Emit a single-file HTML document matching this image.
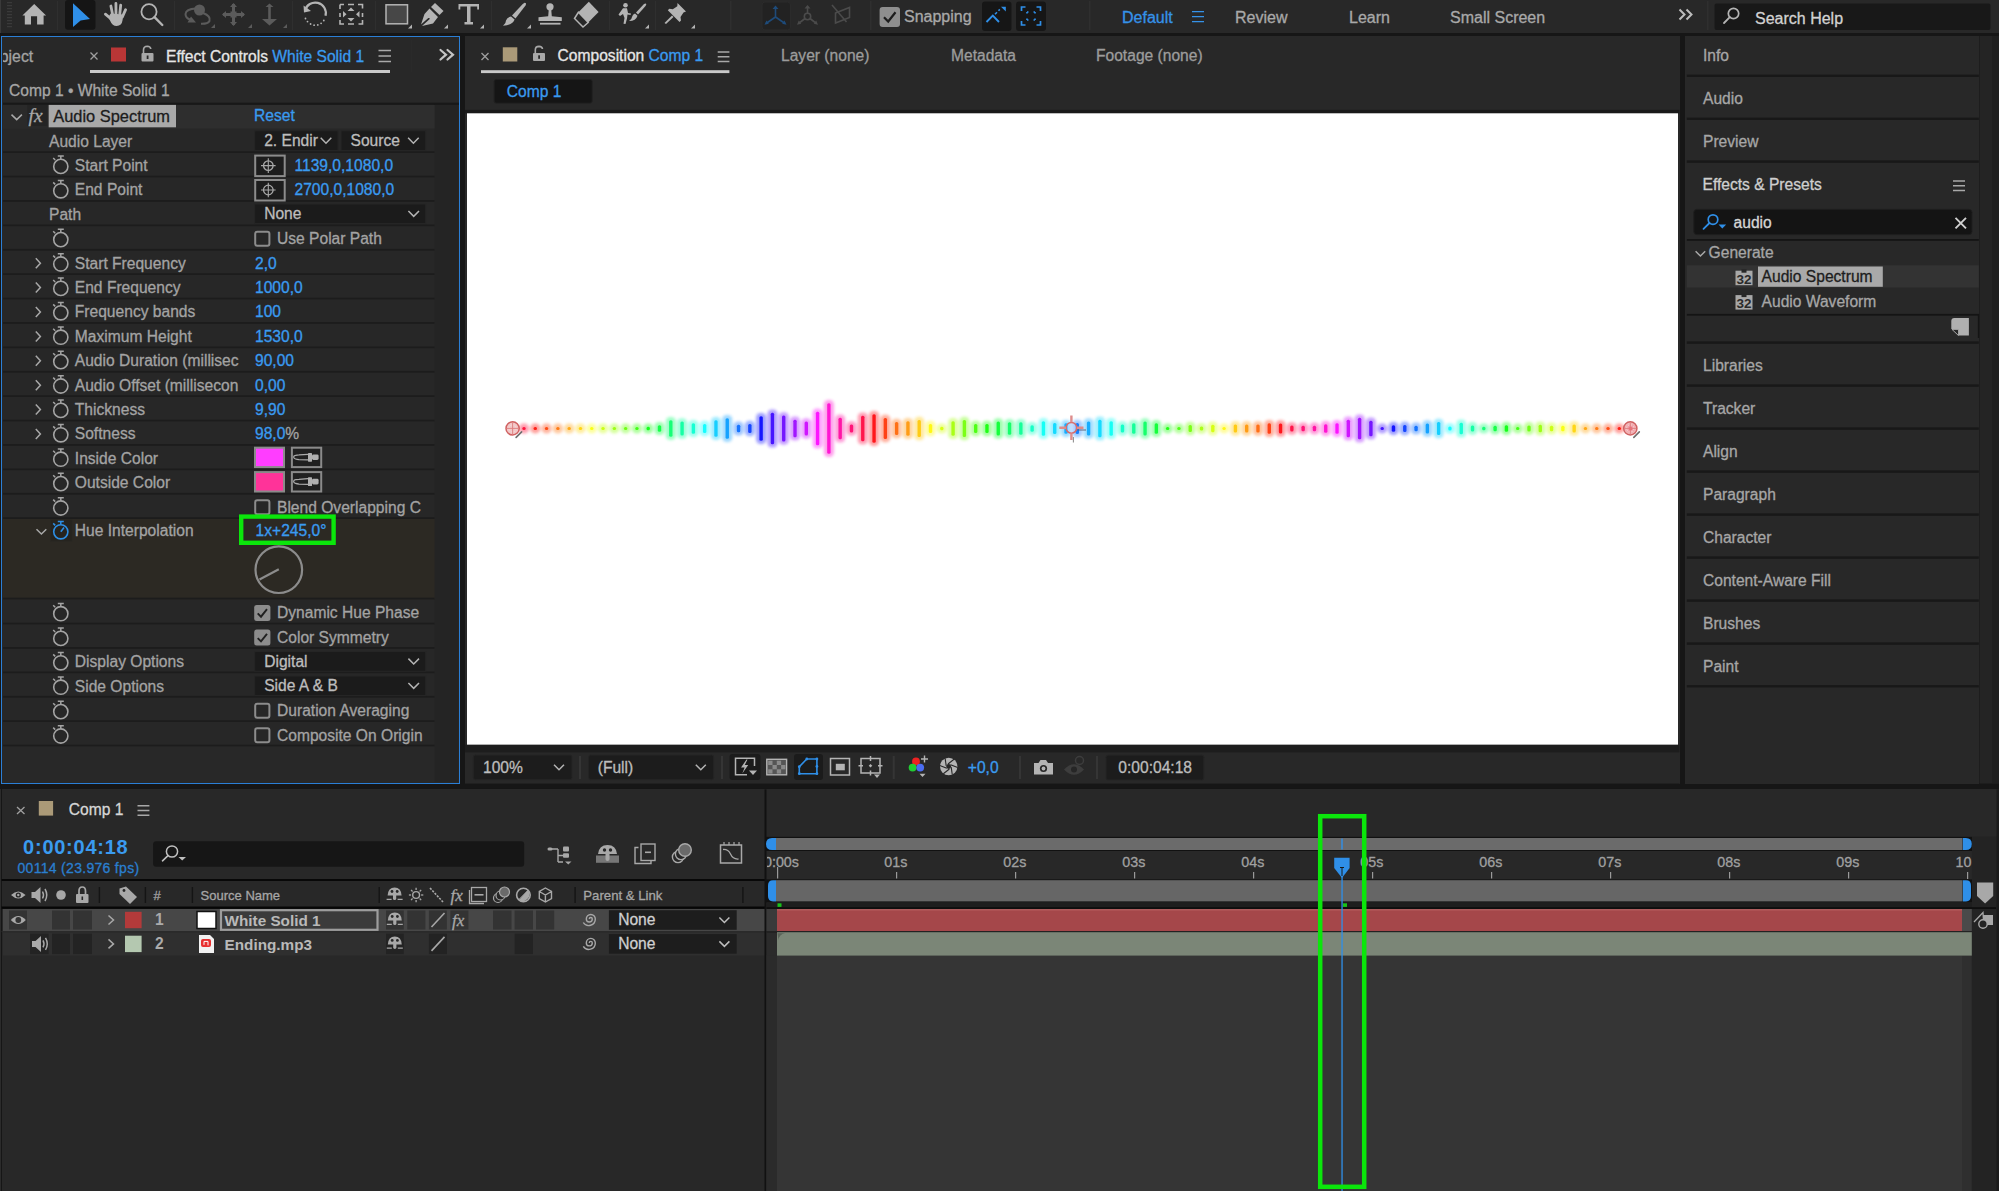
<!DOCTYPE html>
<html><head><meta charset="utf-8">
<style>
*{box-sizing:border-box;margin:0;padding:0}
html,body{width:1999px;height:1191px;overflow:hidden;background:#161616;font-family:"Liberation Sans",sans-serif;font-size:15.5px;color:#a3a3a3}
.a{position:absolute}
.t{position:absolute;white-space:nowrap;line-height:1;-webkit-text-stroke:0.3px currentColor}
.blue{color:#3a98ef}
svg{position:absolute;overflow:visible}
</style></head><body>

<!-- TOOLBAR -->
<div class="a" id="toolbar" style="left:0;top:0;width:1999px;height:33px;background:#282828">
<svg width="1999" height="33" style="left:0;top:0">
<g fill="#3a3a3a"><rect x="7" y="2" width="5" height="1.3"/><rect x="7" y="5" width="5" height="1.3"/><rect x="7" y="8" width="5" height="1.3"/><rect x="7" y="11" width="5" height="1.3"/><rect x="7" y="14" width="5" height="1.3"/><rect x="7" y="17" width="5" height="1.3"/><rect x="7" y="20" width="5" height="1.3"/><rect x="7" y="23" width="5" height="1.3"/><rect x="7" y="26" width="5" height="1.3"/></g>
<g fill="#2f2f2f"><rect x="57" y="1" width="1" height="29"/><rect x="174" y="1" width="1" height="29"/><rect x="292" y="1" width="1" height="29"/><rect x="375" y="1" width="1" height="29"/><rect x="491" y="1" width="1" height="29"/><rect x="609" y="1" width="1" height="29"/><rect x="655" y="1" width="1" height="29"/><rect x="730" y="1" width="1.5" height="29"/><rect x="870" y="1" width="1.5" height="29"/><rect x="1089" y="1" width="1.5" height="29"/><rect x="1707" y="1" width="1.5" height="29"/></g>
<path d="M34.2 4 L46.1 15.6 L43.6 15.6 L43.6 24.6 L37.1 24.6 L37.1 16.2 L31 16.2 L31 24.6 L24.8 24.6 L24.8 15.6 L22.4 15.6 Z" fill="#b4b4b4"/>
<rect x="65" y="0" width="30.5" height="29.7" rx="3" fill="#151515"/>
<path d="M73 3.2 L90 18.9 L80.6 20.6 L73 27 Z" fill="#2f8fe8"/>
<path d="M125.6 9.7 L122.4 16.8 M120.7 5.1 L119.8 14 M115.9 3.5 L116 14 M110.9 6 L112.6 14.5 M105.4 14.2 L110.8 18.6" stroke="#b4b4b4" stroke-width="2.8" stroke-linecap="round"/><path d="M110.6 13.5 L123.4 14.5 L122.6 20 Q121.8 25.9 116.6 25.9 Q112.2 25.9 110.4 21.2 L108.4 17.2 Z" fill="#b4b4b4"/>
<circle cx="149" cy="11.7" r="7.6" fill="none" stroke="#b4b4b4" stroke-width="1.8"/><path d="M154.5 17.2 L162.3 25" stroke="#b4b4b4" stroke-width="2.4" stroke-linecap="round"/>
<g fill="#5b5b5b" stroke="#5b5b5b">
<circle cx="199.5" cy="10" r="5.5" stroke="none"/>
<path d="M196 8.5 Q186 9 185.5 14 Q185.5 18 190 19.5" fill="none" stroke-width="2"/><path d="M203 13 Q211 16 209.5 21 Q208 24 201 23.8" fill="none" stroke-width="2"/><path d="M187.5 22.5 L196 22.5 L191 16.5 Z" stroke="none"/>
<path d="M233.5 4 L233.5 25 M223 14.5 L244 14.5" stroke-width="3"/><path d="M233.5 3 L230 7 L237 7Z M233.5 26 L230 22 L237 22Z M222 14.5 L226 11 L226 18Z M245 14.5 L241 11 L241 18Z" stroke="none"/><rect x="230.5" y="11.5" width="6" height="6" stroke="none"/>
<path d="M269.5 5 L269.5 22" stroke-width="2.6"/><path d="M269.5 3.5 L265.5 7 L273.5 7Z M262 19 L277 19 L269.5 25.5Z" stroke="none"/>
<path d="M211 28 L215 28 L215 24Z M248 28 L252 28 L252 24Z M283 28 L287 28 L287 24Z" stroke="none"/>
</g>
<g fill="#b4b4b4">
<path d="M305 10.5 A10.5 10.5 0 1 1 325.5 15.8" fill="none" stroke="#b4b4b4" stroke-width="2.2" stroke-dasharray="40 0"/>
<path d="M303.5 5.5 L304 12.5 L311 11 Z"/>
<g><circle cx="305.5" cy="18.5" r="0.9"/><circle cx="307.5" cy="21.6" r="0.9"/><circle cx="310.6" cy="24" r="0.9"/><circle cx="314.1" cy="25.2" r="0.9"/><circle cx="317.8" cy="24.9" r="0.9"/><circle cx="321.1" cy="23.3" r="0.9"/><circle cx="323.8" cy="20.5" r="0.9"/></g>
<path d="M340 4.5 h4 M348 4.5 h6 M358 4.5 h4.5 v4 M362.5 13 v4 M362.5 20 v4 h-4 M354 24 h-6 M344 24 h-4 v-4 M340 17 v-4 M340 9 v-4.5" fill="none" stroke="#b4b4b4" stroke-width="1.6"/>
<path d="M351 7.5 L354.5 11 L347.5 11Z M351 21.5 L354.5 18 L347.5 18Z M343 11 L346.5 14.3 L343 17.5Z M359.5 11 L356 14.3 L359.5 17.5Z"/>
<rect x="386" y="4.8" width="21.5" height="19" fill="#474747" stroke="#b4b4b4" stroke-width="1.5"/>
<path d="M408 28.5 L412 28.5 L412 24.5Z M444 28.5 L448 28.5 L448 24.5Z M480 28.5 L484 28.5 L484 24.5Z M527 28.5 L531 28.5 L531 24.5Z M645 28.5 L649 28.5 L649 24.5Z M691 28.5 L695 28.5 L695 24.5Z"/>
<path d="M435 3 L443.5 11 L439.5 15 L431 7Z"/><path d="M429.5 8.5 L438 17 L433 23.5 L422 26 L430 18.8 Q429 17.5 428.3 18.1 L421 24.6 L424.5 14Z"/>
<path d="M458.5 4 L479 4 L479 9.6 L477.2 9.6 L477.2 6.6 L470.5 6.6 L470.5 22 L473 22 L473 24.5 L464.5 24.5 L464.5 22 L467 22 L467 6.6 L460.3 6.6 L460.3 9.6 L458.5 9.6Z"/>
<path d="M524.5 2.8 Q527 3 525.5 5.5 L515.5 18.5 L512 15.6 L522.5 4.2Z"/><path d="M511 16.5 L514.6 19.5 Q513 25 503 25.8 Q506 23.8 506 20.5 Q507 17.3 511 16.5Z"/>
<circle cx="550" cy="6.8" r="3.6"/><path d="M548.8 9 L551.2 9 L551.8 16.2 L561.8 17.3 L561.8 21 L538.5 21 L538.5 17.3 L548.2 16.2Z"/><rect x="540" y="22.8" width="20.5" height="1.8"/>
<path d="M588.8 1.8 L598.6 12 L588.2 22.5 L578.4 12.3Z"/><path d="M578.4 12.3 L588.2 22.5 L583 27 L574.5 18.5Z" fill="none" stroke="#b4b4b4" stroke-width="1.5"/>
<circle cx="625.5" cy="5.2" r="2.3"/><path d="M623 8.3 L627 8.3 L628 13 L631 13.5 L630.5 15 L627.5 14.5 L627 18.5 L625.5 24 L623.5 23.8 L624.5 18 L623 14 L620 16 L618.5 14.5Z"/><path d="M645.5 3.5 Q647 4 645.5 6 L638 14.5 L636 12.5 L644 4Z"/><path d="M635 13.5 L637.5 15.8 Q636 21 629 21 Q632 19 632 17 Q632.6 14 635 13.5Z"/>
<path d="M677.5 3 L686 11.5 L683.5 12.5 L680.5 17 L681 20.5 L679.5 22 L667.8 10.3 L669.3 8.8 L672.8 9.3 L677.3 6.3Z"/><path d="M672 15.5 L673.5 17 L666 24 L664.5 23Z"/>
</g>
<rect x="762" y="2" width="28.5" height="28" rx="3" fill="#222" stroke="#2b2b2b"/>
<g stroke="#1e4b7a" stroke-width="1.6" fill="none"><path d="M775.5 17 L775.5 7 M775.5 17 L766 23.5 M775.5 17 L785 23.5"/></g><g fill="#1e4b7a"><path d="M775.5 5.5 L772.5 9 L778.5 9Z M764.5 24.8 L766.5 20.5 L768.8 23.8Z M786.5 24.8 L784.5 20.5 L782.2 23.8Z"/></g>
<g stroke="#4b4b4b" stroke-width="1.6" fill="none"><circle cx="807.5" cy="16.5" r="3.2"/><path d="M807.5 13 L807.5 6.5 M805 18.5 L798.5 23.5 M810 18.5 L816.5 23.5"/><path d="M835.5 13 L849.5 7.5 L849.5 17.5 L835.5 23Z M832 5 L846.5 22"/></g>
<g fill="#4b4b4b"><path d="M807.5 5 L804.5 8.5 L810.5 8.5Z M797 24.8 L798.8 20.5 L801.2 23.8Z M818 24.8 L816.2 20.5 L813.8 23.8Z"/></g>
<rect x="879.6" y="7" width="20.4" height="20" rx="3" fill="#8e8e8e"/><path d="M884 17.2 L888.2 21.5 L895.5 12.3" fill="none" stroke="#1d1d1d" stroke-width="2.2"/>
<rect x="982" y="1.5" width="29.5" height="29.5" rx="3" fill="#161616"/><rect x="1016" y="1.5" width="30" height="29.5" rx="3" fill="#161616"/>
<path d="M986.5 22 L992.8 15.5 L999 22" fill="none" stroke="#2f8fe8" stroke-width="1.9"/><path d="M995 14.2 L997 12.2 M998.5 10.7 L999.8 9.4" stroke="#2f8fe8" stroke-width="1.6"/><path d="M1001 6.8 L1005.8 6.8 L1005.8 11.6Z" fill="#2f8fe8"/>
<path d="M1021.5 11 V7 H1025.5 M1036.5 7 H1040.5 V11 M1040.5 21 V25 H1036.5 M1025.5 25 H1021.5 V21 M1027 12 h1.5 M1033.5 12 h1.5 M1027 20 h1.5 M1033.5 20 h1.5 M1027 12 v1.5 M1035 12 v1.5 M1027 20 v-1.5 M1035 20 v-1.5" fill="none" stroke="#2f8fe8" stroke-width="1.7"/>
<path d="M1192 11.6 h12 M1192 16.6 h12 M1192 21.6 h12" stroke="#3592e8" stroke-width="1.4"/>
<path d="M1679.5 9.5 L1684.5 14.5 L1679.5 19.5 M1686.5 9.5 L1691.5 14.5 L1686.5 19.5" fill="none" stroke="#bdbdbd" stroke-width="2"/>
<rect x="1714.5" y="3.5" width="276" height="26.5" rx="2" fill="#181818"/>
<circle cx="1733.5" cy="13.5" r="5.2" fill="none" stroke="#b4b4b4" stroke-width="1.7"/><path d="M1729.8 17.2 L1724 23" stroke="#b4b4b4" stroke-width="1.8" stroke-linecap="round"/>
</svg>
<div class="t" style="left:904px;top:9px;font-size:16px;color:#a9a9a9">Snapping</div>
<div class="t" style="left:1122px;top:10px;font-size:16px;color:#3592e8">Default</div>
<div class="t" style="left:1235px;top:10px;font-size:16px;color:#a9a9a9">Review</div>
<div class="t" style="left:1349px;top:10px;font-size:16px;color:#a9a9a9">Learn</div>
<div class="t" style="left:1450px;top:10px;font-size:16px;color:#a9a9a9">Small Screen</div>
<div class="t" style="left:1755px;top:11px;font-size:16px;color:#d2d2d2">Search Help</div>
</div>


<!-- EFFECT CONTROLS PANEL -->
<div class="a" style="left:1.3px;top:36px;width:459px;height:748px;background:#282828;border:1.8px solid #2b7fd6"></div><svg width="470" height="790" style="left:0;top:0"><path d="M90.5 52.5 L97.5 59.5 M97.5 52.5 L90.5 59.5" stroke="#a0a0a0" stroke-width="1.3"/><rect x="111" y="47.5" width="15" height="14" fill="#b93636"/><path d="M143.5 53.5 V50 Q143.5 46.2 147.3 46.2 Q150.5 46.4 150.8 49" fill="none" stroke="#a8a8a8" stroke-width="1.6"/><rect x="141.5" y="53" width="12" height="8.5" rx="1" fill="#a8a8a8"/><rect x="146.7" y="55.5" width="1.8" height="3.5" fill="#282828"/><rect x="90" y="70" width="300" height="3" fill="#c9c9c9"/><path d="M378.5 50.5 h12.5 M378.5 56 h12.5 M378.5 61.5 h12.5" stroke="#a8a8a8" stroke-width="1.5"/><path d="M440.5 50 L446 54.7 L440.5 59.5 M447.5 50 L453 54.7 L447.5 59.5" fill="none" stroke="#c4c4c4" stroke-width="2.2" stroke-linecap="round"/><rect x="411" y="40" width="1" height="32" fill="#2a2a2a"/><rect x="3" y="102.7" width="456" height="2.2" fill="#181818"/><rect x="3" y="128.6" width="431.5" height="617.4" fill="#272727"/><rect x="434.5" y="104.9" width="24" height="677" fill="#242424"/><rect x="3" y="104.9" width="431.5" height="23.7" fill="#2e2e2e"/><rect x="3" y="104.9" width="45" height="23.7" fill="#2a2a2a"/><rect x="27.3" y="104.9" width="20.2" height="21" fill="#242424"/><rect x="48.7" y="104.9" width="127.3" height="22.4" fill="#a9a9a9"/><path d="M11.5 114.6 L16.7 119.6 L21.9 114.6" fill="none" stroke="#a8a8a8" stroke-width="1.5"/><rect x="3" y="151.30" width="431.5" height="1.7" fill="#1c1c1c"/><rect x="254.7" y="130.8" width="83.40000000000003" height="19.6" fill="#1b1b1b" stroke="#262626" stroke-width="1"/><path d="M320.7 137.8 L326 143.20000000000002 L331.3 137.8" fill="none" stroke="#b4b4b4" stroke-width="1.5"/><rect x="341" y="130.8" width="84.69999999999999" height="19.6" fill="#1b1b1b" stroke="#262626" stroke-width="1"/><path d="M408.09999999999997 137.8 L413.4 143.20000000000002 L418.7 137.8" fill="none" stroke="#b4b4b4" stroke-width="1.5"/><rect x="3" y="175.70" width="431.5" height="1.7" fill="#1c1c1c"/><circle cx="60.8" cy="166.4" r="7.1" fill="none" stroke="#a4a4a4" stroke-width="1.6"/><path d="M60.8 159.20000000000002 V156.20000000000002 M57.8 156.1 H63.8 M53.199999999999996 158.0 L55.199999999999996 160.0" stroke="#a4a4a4" stroke-width="1.5"/><rect x="255.2" y="155.6" width="29.5" height="20.5" fill="#1d1d1d" stroke="#8c8c8c" stroke-width="2"/><circle cx="268.3" cy="165.6" r="4.8" fill="none" stroke="#a8a8a8" stroke-width="1.3"/><path d="M261 165.6 H275.6 M268.3 158.29999999999998 V172.9" stroke="#a8a8a8" stroke-width="1.1"/><rect x="3" y="200.10" width="431.5" height="1.7" fill="#1c1c1c"/><circle cx="60.8" cy="190.80000000000004" r="7.1" fill="none" stroke="#a4a4a4" stroke-width="1.6"/><path d="M60.8 183.60000000000005 V180.60000000000005 M57.8 180.50000000000003 H63.8 M53.199999999999996 182.40000000000003 L55.199999999999996 184.40000000000003" stroke="#a4a4a4" stroke-width="1.5"/><rect x="255.2" y="180.00000000000003" width="29.5" height="20.5" fill="#1d1d1d" stroke="#8c8c8c" stroke-width="2"/><circle cx="268.3" cy="190.00000000000003" r="4.8" fill="none" stroke="#a8a8a8" stroke-width="1.3"/><path d="M261 190.00000000000003 H275.6 M268.3 182.70000000000002 V197.30000000000004" stroke="#a8a8a8" stroke-width="1.1"/><rect x="3" y="224.50" width="431.5" height="1.7" fill="#1c1c1c"/><rect x="254.7" y="204.0" width="171.0" height="19.6" fill="#1b1b1b" stroke="#262626" stroke-width="1"/><path d="M408.4 211.0 L413.7 216.4 L419.0 211.0" fill="none" stroke="#b4b4b4" stroke-width="1.5"/><rect x="3" y="248.90" width="431.5" height="1.7" fill="#1c1c1c"/><circle cx="60.8" cy="239.60000000000005" r="7.1" fill="none" stroke="#a4a4a4" stroke-width="1.6"/><path d="M60.8 232.40000000000006 V229.40000000000006 M57.8 229.30000000000004 H63.8 M53.199999999999996 231.20000000000005 L55.199999999999996 233.20000000000005" stroke="#a4a4a4" stroke-width="1.5"/><rect x="255.2" y="231.80000000000004" width="14.2" height="14" rx="2" fill="none" stroke="#8c8c8c" stroke-width="2"/><rect x="3" y="273.30" width="431.5" height="1.7" fill="#1c1c1c"/><circle cx="60.8" cy="264.0" r="7.1" fill="none" stroke="#a4a4a4" stroke-width="1.6"/><path d="M60.8 256.8 V253.8 M57.8 253.7 H63.8 M53.199999999999996 255.6 L55.199999999999996 257.6" stroke="#a4a4a4" stroke-width="1.5"/><path d="M35.8 258.2 L40.4 263.2 L35.8 268.2" fill="none" stroke="#a8a8a8" stroke-width="1.5"/><rect x="3" y="297.70" width="431.5" height="1.7" fill="#1c1c1c"/><circle cx="60.8" cy="288.4" r="7.1" fill="none" stroke="#a4a4a4" stroke-width="1.6"/><path d="M60.8 281.2 V278.2 M57.8 278.09999999999997 H63.8 M53.199999999999996 280.0 L55.199999999999996 282.0" stroke="#a4a4a4" stroke-width="1.5"/><path d="M35.8 282.59999999999997 L40.4 287.59999999999997 L35.8 292.59999999999997" fill="none" stroke="#a8a8a8" stroke-width="1.5"/><rect x="3" y="322.10" width="431.5" height="1.7" fill="#1c1c1c"/><circle cx="60.8" cy="312.79999999999995" r="7.1" fill="none" stroke="#a4a4a4" stroke-width="1.6"/><path d="M60.8 305.59999999999997 V302.59999999999997 M57.8 302.49999999999994 H63.8 M53.199999999999996 304.4 L55.199999999999996 306.4" stroke="#a4a4a4" stroke-width="1.5"/><path d="M35.8 306.99999999999994 L40.4 311.99999999999994 L35.8 316.99999999999994" fill="none" stroke="#a8a8a8" stroke-width="1.5"/><rect x="3" y="346.50" width="431.5" height="1.7" fill="#1c1c1c"/><circle cx="60.8" cy="337.19999999999993" r="7.1" fill="none" stroke="#a4a4a4" stroke-width="1.6"/><path d="M60.8 329.99999999999994 V326.99999999999994 M57.8 326.8999999999999 H63.8 M53.199999999999996 328.79999999999995 L55.199999999999996 330.79999999999995" stroke="#a4a4a4" stroke-width="1.5"/><path d="M35.8 331.3999999999999 L40.4 336.3999999999999 L35.8 341.3999999999999" fill="none" stroke="#a8a8a8" stroke-width="1.5"/><rect x="3" y="370.90" width="431.5" height="1.7" fill="#1c1c1c"/><circle cx="60.8" cy="361.5999999999999" r="7.1" fill="none" stroke="#a4a4a4" stroke-width="1.6"/><path d="M60.8 354.3999999999999 V351.3999999999999 M57.8 351.2999999999999 H63.8 M53.199999999999996 353.19999999999993 L55.199999999999996 355.19999999999993" stroke="#a4a4a4" stroke-width="1.5"/><path d="M35.8 355.7999999999999 L40.4 360.7999999999999 L35.8 365.7999999999999" fill="none" stroke="#a8a8a8" stroke-width="1.5"/><rect x="3" y="395.30" width="431.5" height="1.7" fill="#1c1c1c"/><circle cx="60.8" cy="385.9999999999999" r="7.1" fill="none" stroke="#a4a4a4" stroke-width="1.6"/><path d="M60.8 378.7999999999999 V375.7999999999999 M57.8 375.6999999999999 H63.8 M53.199999999999996 377.5999999999999 L55.199999999999996 379.5999999999999" stroke="#a4a4a4" stroke-width="1.5"/><path d="M35.8 380.1999999999999 L40.4 385.1999999999999 L35.8 390.1999999999999" fill="none" stroke="#a8a8a8" stroke-width="1.5"/><rect x="3" y="419.70" width="431.5" height="1.7" fill="#1c1c1c"/><circle cx="60.8" cy="410.39999999999986" r="7.1" fill="none" stroke="#a4a4a4" stroke-width="1.6"/><path d="M60.8 403.1999999999999 V400.1999999999999 M57.8 400.09999999999985 H63.8 M53.199999999999996 401.9999999999999 L55.199999999999996 403.9999999999999" stroke="#a4a4a4" stroke-width="1.5"/><path d="M35.8 404.59999999999985 L40.4 409.59999999999985 L35.8 414.59999999999985" fill="none" stroke="#a8a8a8" stroke-width="1.5"/><rect x="3" y="444.10" width="431.5" height="1.7" fill="#1c1c1c"/><circle cx="60.8" cy="434.79999999999984" r="7.1" fill="none" stroke="#a4a4a4" stroke-width="1.6"/><path d="M60.8 427.59999999999985 V424.59999999999985 M57.8 424.49999999999983 H63.8 M53.199999999999996 426.39999999999986 L55.199999999999996 428.39999999999986" stroke="#a4a4a4" stroke-width="1.5"/><path d="M35.8 428.99999999999983 L40.4 433.99999999999983 L35.8 438.99999999999983" fill="none" stroke="#a8a8a8" stroke-width="1.5"/><rect x="3" y="468.50" width="431.5" height="1.7" fill="#1c1c1c"/><circle cx="60.8" cy="459.1999999999998" r="7.1" fill="none" stroke="#a4a4a4" stroke-width="1.6"/><path d="M60.8 451.99999999999983 V448.99999999999983 M57.8 448.8999999999998 H63.8 M53.199999999999996 450.79999999999984 L55.199999999999996 452.79999999999984" stroke="#a4a4a4" stroke-width="1.5"/><rect x="255" y="447.6999999999998" width="29" height="19.4" fill="#ff3dff" stroke="#8a8a8a" stroke-width="2"/><rect x="291.9" y="447.6999999999998" width="29.3" height="19.4" fill="#202020" stroke="#8a8a8a" stroke-width="2"/><path d="M308 454.29999999999984 L299 454.8999999999998 Q297 454.8999999999998 295.5 455.29999999999984 Q293.6 455.59999999999985 293.6 457.09999999999985 Q293.6 458.59999999999985 295.5 458.99999999999983 Q297 459.3999999999998 299 459.6999999999998 L308 459.8999999999998" fill="none" stroke="#aaaaaa" stroke-width="1.2"/><rect x="308" y="452.8999999999998" width="4" height="8.8" rx="0.6" fill="#b0b0b0"/><rect x="312" y="454.3999999999998" width="6.6" height="5.6" rx="1.4" fill="#b0b0b0"/><rect x="3" y="492.90" width="431.5" height="1.7" fill="#1c1c1c"/><circle cx="60.8" cy="483.5999999999998" r="7.1" fill="none" stroke="#a4a4a4" stroke-width="1.6"/><path d="M60.8 476.3999999999998 V473.3999999999998 M57.8 473.2999999999998 H63.8 M53.199999999999996 475.1999999999998 L55.199999999999996 477.1999999999998" stroke="#a4a4a4" stroke-width="1.5"/><rect x="255" y="472.0999999999998" width="29" height="19.4" fill="#ff3399" stroke="#8a8a8a" stroke-width="2"/><rect x="291.9" y="472.0999999999998" width="29.3" height="19.4" fill="#202020" stroke="#8a8a8a" stroke-width="2"/><path d="M308 478.6999999999998 L299 479.2999999999998 Q297 479.2999999999998 295.5 479.6999999999998 Q293.6 479.99999999999983 293.6 481.49999999999983 Q293.6 482.99999999999983 295.5 483.3999999999998 Q297 483.7999999999998 299 484.0999999999998 L308 484.2999999999998" fill="none" stroke="#aaaaaa" stroke-width="1.2"/><rect x="308" y="477.2999999999998" width="4" height="8.8" rx="0.6" fill="#b0b0b0"/><rect x="312" y="478.7999999999998" width="6.6" height="5.6" rx="1.4" fill="#b0b0b0"/><rect x="3" y="517.30" width="431.5" height="1.7" fill="#1c1c1c"/><circle cx="60.8" cy="507.9999999999998" r="7.1" fill="none" stroke="#a4a4a4" stroke-width="1.6"/><path d="M60.8 500.7999999999998 V497.7999999999998 M57.8 497.69999999999976 H63.8 M53.199999999999996 499.5999999999998 L55.199999999999996 501.5999999999998" stroke="#a4a4a4" stroke-width="1.5"/><rect x="255.2" y="500.19999999999976" width="14.2" height="14" rx="2" fill="none" stroke="#8c8c8c" stroke-width="2"/><rect x="3" y="518.9999999999998" width="431.5" height="80.4000000000002" fill="#2c2923"/><rect x="50.4" y="519.7999999999997" width="21.6" height="21.6" fill="#26241f" stroke="#2a2824" stroke-width="0.8"/><path d="M36.5 529.1999999999998 L41.4 533.9999999999998 L46.3 529.1999999999998" fill="none" stroke="#a8a8a8" stroke-width="1.5"/><circle cx="60.8" cy="531.7999999999997" r="7.1" fill="none" stroke="#2d8fe5" stroke-width="1.6"/><path d="M60.8 524.5999999999997 V521.5999999999997 M57.8 521.4999999999998 H63.8 M53.199999999999996 523.3999999999997 L55.199999999999996 525.3999999999997" stroke="#2d8fe5" stroke-width="1.5"/><path d="M60.8 531.7999999999997 L64 527.4999999999998" stroke="#2d8fe5" stroke-width="1.6"/><circle cx="278.8" cy="569.7" r="23.3" fill="none" stroke="#8c8c8c" stroke-width="2.2"/><path d="M278.8 569.3 L259.5 579.5" stroke="#8c8c8c" stroke-width="2.2"/><rect x="3" y="597.70" width="431.5" height="1.7" fill="#1c1c1c"/><rect x="3" y="622.70" width="431.5" height="1.7" fill="#1c1c1c"/><circle cx="60.8" cy="613.6999999999999" r="7.1" fill="none" stroke="#a4a4a4" stroke-width="1.6"/><path d="M60.8 606.4999999999999 V603.4999999999999 M57.8 603.4 H63.8 M53.199999999999996 605.3 L55.199999999999996 607.3" stroke="#a4a4a4" stroke-width="1.5"/><rect x="254.2" y="604.9" width="16.2" height="16" rx="2.5" fill="#8c8c8c"/><path d="M257.7 613.4 L261.0 616.6999999999999 L267.0 609.1" fill="none" stroke="#202020" stroke-width="1.9"/><rect x="3" y="647.10" width="431.5" height="1.7" fill="#1c1c1c"/><circle cx="60.8" cy="638.3999999999999" r="7.1" fill="none" stroke="#a4a4a4" stroke-width="1.6"/><path d="M60.8 631.1999999999998 V628.1999999999998 M57.8 628.0999999999999 H63.8 M53.199999999999996 629.9999999999999 L55.199999999999996 631.9999999999999" stroke="#a4a4a4" stroke-width="1.5"/><rect x="254.2" y="629.5999999999999" width="16.2" height="16" rx="2.5" fill="#8c8c8c"/><path d="M257.7 638.0999999999999 L261.0 641.3999999999999 L267.0 633.8" fill="none" stroke="#202020" stroke-width="1.9"/><rect x="3" y="671.50" width="431.5" height="1.7" fill="#1c1c1c"/><circle cx="60.8" cy="662.8" r="7.1" fill="none" stroke="#a4a4a4" stroke-width="1.6"/><path d="M60.8 655.5999999999999 V652.5999999999999 M57.8 652.5 H63.8 M53.199999999999996 654.4 L55.199999999999996 656.4" stroke="#a4a4a4" stroke-width="1.5"/><rect x="254.7" y="651.6" width="171.0" height="19.6" fill="#1b1b1b" stroke="#262626" stroke-width="1"/><path d="M408.4 658.6 L413.7 664.0 L419.0 658.6" fill="none" stroke="#b4b4b4" stroke-width="1.5"/><rect x="3" y="695.90" width="431.5" height="1.7" fill="#1c1c1c"/><circle cx="60.8" cy="687.1999999999998" r="7.1" fill="none" stroke="#a4a4a4" stroke-width="1.6"/><path d="M60.8 679.9999999999998 V676.9999999999998 M57.8 676.8999999999999 H63.8 M53.199999999999996 678.7999999999998 L55.199999999999996 680.7999999999998" stroke="#a4a4a4" stroke-width="1.5"/><rect x="254.7" y="675.9999999999999" width="171.0" height="19.6" fill="#1b1b1b" stroke="#262626" stroke-width="1"/><path d="M408.4 682.9999999999999 L413.7 688.3999999999999 L419.0 682.9999999999999" fill="none" stroke="#b4b4b4" stroke-width="1.5"/><rect x="3" y="720.30" width="431.5" height="1.7" fill="#1c1c1c"/><circle cx="60.8" cy="711.5999999999999" r="7.1" fill="none" stroke="#a4a4a4" stroke-width="1.6"/><path d="M60.8 704.3999999999999 V701.3999999999999 M57.8 701.3 H63.8 M53.199999999999996 703.1999999999999 L55.199999999999996 705.1999999999999" stroke="#a4a4a4" stroke-width="1.5"/><rect x="255.2" y="703.8" width="14.2" height="14" rx="2" fill="none" stroke="#8c8c8c" stroke-width="2"/><rect x="3" y="744.70" width="431.5" height="1.7" fill="#1c1c1c"/><circle cx="60.8" cy="735.9999999999998" r="7.1" fill="none" stroke="#a4a4a4" stroke-width="1.6"/><path d="M60.8 728.7999999999997 V725.7999999999997 M57.8 725.6999999999998 H63.8 M53.199999999999996 727.5999999999998 L55.199999999999996 729.5999999999998" stroke="#a4a4a4" stroke-width="1.5"/><rect x="255.2" y="728.1999999999998" width="14.2" height="14" rx="2" fill="none" stroke="#8c8c8c" stroke-width="2"/><rect x="241.2" y="516.6" width="92.4" height="26.2" fill="none" stroke="#0be60b" stroke-width="4.4"/></svg><div class="a" style="left:3px;top:40px;width:60px;height:30px;overflow:hidden"><div class="t" style="left:-3.2px;top:8.6px;font-size:15.8px;color:#a3a3a3">bject</div></div><div class="t" style="left:166px;top:48.68px;font-size:15.6px;color:#e6e6e6;">Effect Controls <span style="color:#3a9bf0">White Solid 1</span></div><div class="t" style="left:9px;top:82.98px;font-size:15.6px;color:#a6a6a6;">Comp 1 • White Solid 1</div><div class="t" style="left:53.3px;top:108.40px;font-size:16.4px;color:#1c1c1c;">Audio Spectrum</div><div class="t" style="left:28.5px;top:106.20px;font-size:19.5px;color:#a8a8a8;font-family:'Liberation Serif',serif;font-style:italic;">fx</div><div class="t" style="left:254px;top:108.48px;font-size:15.6px;color:#3a9bf0;">Reset</div><div class="t" style="left:49px;top:133.68px;font-size:15.6px;color:#a3a3a3;">Audio Layer</div><div class="t" style="left:264.2px;top:133.08px;font-size:15.6px;color:#bdbdbd;">2. Endir</div><div class="t" style="left:350.5px;top:133.08px;font-size:15.6px;color:#bdbdbd;">Source</div><div class="t" style="left:74.8px;top:158.08px;font-size:15.6px;color:#a3a3a3;">Start Point</div><div class="t" style="left:294.5px;top:158.08px;font-size:15.6px;color:#3a9bf0;">1139,0,1080,0</div><div class="t" style="left:74.8px;top:182.48px;font-size:15.6px;color:#a3a3a3;">End Point</div><div class="t" style="left:294.5px;top:182.48px;font-size:15.6px;color:#3a9bf0;">2700,0,1080,0</div><div class="t" style="left:49px;top:206.88px;font-size:15.6px;color:#a3a3a3;">Path</div><div class="t" style="left:264.2px;top:206.28px;font-size:15.6px;color:#bdbdbd;">None</div><div class="t" style="left:277px;top:231.28px;font-size:15.6px;color:#a3a3a3;">Use Polar Path</div><div class="t" style="left:74.8px;top:255.68px;font-size:15.6px;color:#a3a3a3;">Start Frequency</div><div class="t" style="left:255px;top:255.68px;font-size:15.6px;color:#3a9bf0;">2,0</div><div class="t" style="left:74.8px;top:280.08px;font-size:15.6px;color:#a3a3a3;">End Frequency</div><div class="t" style="left:255px;top:280.08px;font-size:15.6px;color:#3a9bf0;">1000,0</div><div class="t" style="left:74.8px;top:304.48px;font-size:15.6px;color:#a3a3a3;">Frequency bands</div><div class="t" style="left:255px;top:304.48px;font-size:15.6px;color:#3a9bf0;">100</div><div class="t" style="left:74.8px;top:328.88px;font-size:15.6px;color:#a3a3a3;">Maximum Height</div><div class="t" style="left:255px;top:328.88px;font-size:15.6px;color:#3a9bf0;">1530,0</div><div class="t" style="left:74.8px;top:353.28px;font-size:15.6px;color:#a3a3a3;">Audio Duration (millisec</div><div class="t" style="left:255px;top:353.28px;font-size:15.6px;color:#3a9bf0;">90,00</div><div class="t" style="left:74.8px;top:377.68px;font-size:15.6px;color:#a3a3a3;">Audio Offset (millisecon</div><div class="t" style="left:255px;top:377.68px;font-size:15.6px;color:#3a9bf0;">0,00</div><div class="t" style="left:74.8px;top:402.08px;font-size:15.6px;color:#a3a3a3;">Thickness</div><div class="t" style="left:255px;top:402.08px;font-size:15.6px;color:#3a9bf0;">9,90</div><div class="t" style="left:74.8px;top:426.48px;font-size:15.6px;color:#a3a3a3;">Softness</div><div class="t" style="left:255px;top:426.48px;font-size:15.6px;color:#3a9bf0;">98,0<span style="color:#a3a3a3">%</span></div><div class="t" style="left:74.8px;top:450.88px;font-size:15.6px;color:#a3a3a3;">Inside Color</div><div class="t" style="left:74.8px;top:475.28px;font-size:15.6px;color:#a3a3a3;">Outside Color</div><div class="t" style="left:277px;top:499.68px;font-size:15.6px;color:#a3a3a3;">Blend Overlapping C</div><div class="t" style="left:74.8px;top:523.48px;font-size:15.6px;color:#a3a3a3;">Hue Interpolation</div><div class="t" style="left:255.6px;top:523.48px;font-size:15.6px;color:#3a9bf0;">1x+245,0°</div><div class="t" style="left:277px;top:605.38px;font-size:15.6px;color:#a3a3a3;">Dynamic Hue Phase</div><div class="t" style="left:277px;top:630.08px;font-size:15.6px;color:#a3a3a3;">Color Symmetry</div><div class="t" style="left:74.8px;top:654.48px;font-size:15.6px;color:#a3a3a3;">Display Options</div><div class="t" style="left:264.2px;top:653.88px;font-size:15.6px;color:#bdbdbd;">Digital</div><div class="t" style="left:74.8px;top:678.88px;font-size:15.6px;color:#a3a3a3;">Side Options</div><div class="t" style="left:264.2px;top:678.28px;font-size:15.6px;color:#bdbdbd;">Side A &amp; B</div><div class="t" style="left:277px;top:703.28px;font-size:15.6px;color:#a3a3a3;">Duration Averaging</div><div class="t" style="left:277px;top:727.68px;font-size:15.6px;color:#a3a3a3;">Composite On Origin</div>

<!-- COMPOSITION PANEL -->
<div class="a" style="left:465px;top:36px;width:1214.5px;height:747.6px;background:#282828"></div><svg width="1999" height="790" style="left:0;top:0"><path d="M481.5 53 L488.5 60 M488.5 53 L481.5 60" stroke="#a0a0a0" stroke-width="1.3"/><rect x="502.8" y="47.3" width="14.5" height="14.2" fill="#ab9a78"/><path d="M535.3 53.5 V50 Q535.3 46.4 539 46.4 Q542.2 46.6 542.5 49" fill="none" stroke="#a8a8a8" stroke-width="1.6"/><rect x="533" y="53" width="12" height="8" rx="1" fill="#a8a8a8"/><rect x="538.2" y="55.3" width="1.8" height="3.5" fill="#282828"/><rect x="481" y="70.2" width="248.4" height="2.9" fill="#c9c9c9"/><path d="M717.7 52 h11.7 M717.7 56.8 h11.7 M717.7 61.5 h11.7" stroke="#a8a8a8" stroke-width="1.5"/><rect x="494.2" y="79.5" width="97.9" height="23.6" rx="2" fill="#151515" stroke="#1f1f1f" stroke-width="1"/><rect x="465" y="109.8" width="1214.5" height="3.5" fill="#1a1a1a"/><rect x="467" y="113.3" width="1211" height="631.5" fill="#ffffff"/><rect x="465" y="744.8" width="1214.5" height="7.5" fill="#1d1d1d"/><rect x="473.4" y="755" width="98.60000000000002" height="24.6" rx="2" fill="#1c1c1c" stroke="#242424"/><path d="M554 764.8 L559 769.8 L564 764.8" fill="none" stroke="#b4b4b4" stroke-width="1.5"/><rect x="588.7" y="755" width="124.89999999999998" height="24.6" rx="2" fill="#1c1c1c" stroke="#242424"/><path d="M695.8 764.8 L700.8 769.8 L705.8 764.8" fill="none" stroke="#b4b4b4" stroke-width="1.5"/><rect x="579" y="756" width="2" height="23" fill="#353535"/><rect x="721" y="756" width="2" height="23" fill="#353535"/><rect x="892.7" y="756" width="2" height="23" fill="#353535"/><rect x="1019" y="756" width="2" height="23" fill="#353535"/><rect x="1096" y="756" width="2" height="23" fill="#353535"/><rect x="729.5" y="754" width="31" height="26" rx="3" fill="#1b1b1b"/><rect x="794" y="754" width="29" height="26" rx="3" fill="#1b1b1b"/><path d="M754.5 766 V758.3 H735.5 V774.8 H747" fill="none" stroke="#b4b4b4" stroke-width="1.5"/><path d="M746.5 759.5 L741 767.5 L744.6 767.5 L742.3 773.5 L748.2 765 L744.8 765 L747.5 759.5Z" fill="#b4b4b4"/><path d="M749 770.5 L757 770.5 L753 775Z" fill="#b4b4b4"/><rect x="766.8" y="759.3" width="19.8" height="15.5" fill="#555" stroke="#b4b4b4" stroke-width="1.4"/><rect x="768.2" y="760.7" width="4.3" height="4.3" fill="#8a8a8a"/><rect x="768.2" y="769.3" width="4.3" height="4.3" fill="#8a8a8a"/><rect x="772.5" y="765.0" width="4.3" height="4.3" fill="#8a8a8a"/><rect x="776.8" y="760.7" width="4.3" height="4.3" fill="#8a8a8a"/><rect x="776.8" y="769.3" width="4.3" height="4.3" fill="#8a8a8a"/><rect x="781.1" y="765.0" width="4.3" height="4.3" fill="#8a8a8a"/><path d="M799.3 766.7 L806.8 759 L816.9 759 L816.9 773.7 L799.3 773.7Z" fill="none" stroke="#2f8fe8" stroke-width="1.6"/><circle cx="799.3" cy="766.7" r="1.4" fill="#2f8fe8"/><circle cx="806.8" cy="759" r="1.4" fill="#2f8fe8"/><circle cx="816.9" cy="759" r="1.4" fill="#2f8fe8"/><circle cx="816.9" cy="773.7" r="1.4" fill="#2f8fe8"/><circle cx="799.3" cy="773.7" r="1.4" fill="#2f8fe8"/><circle cx="816.9" cy="766.4" r="1.4" fill="#2f8fe8"/><rect x="830.5" y="758.5" width="19" height="16.5" fill="none" stroke="#b4b4b4" stroke-width="1.5"/><rect x="835.8" y="763.8" width="9" height="6.5" fill="#b4b4b4"/><rect x="861" y="758.5" width="19" height="14.5" fill="none" stroke="#b4b4b4" stroke-width="1.5"/><path d="M870.5 756 V761 M870.5 770.5 V775.5 M858.5 765.7 H863 M878 765.7 H882.5" stroke="#b4b4b4" stroke-width="1.5"/><path d="M868.7 765.7 L870.5 763.9 L872.3 765.7 L870.5 767.5Z" fill="#b4b4b4"/><path d="M874 774.5 L880 774.5 L877 778Z" fill="#b4b4b4"/><circle cx="916" cy="761.5" r="3.9" fill="#ee2222"/><circle cx="912.6" cy="767.6" r="3.9" fill="#22cc33"/><circle cx="920.2" cy="767.6" r="3.9" fill="#4a6cf0"/><path d="M924.5 755.5 V762.5 M921 759 H928" stroke="#b4b4b4" stroke-width="1.4"/><path d="M919.5 773.8 L925.5 773.8 L922.5 777Z" fill="#b4b4b4"/><circle cx="948.7" cy="766.5" r="8.7" fill="#b4b4b4"/><path d="M951.21 767.17 L952.28 774.76" stroke="#262626" stroke-width="1.1"/><path d="M949.37 769.01 L943.34 773.73" stroke="#262626" stroke-width="1.1"/><path d="M946.86 768.34 L939.76 765.47" stroke="#262626" stroke-width="1.1"/><path d="M946.19 765.83 L945.12 758.24" stroke="#262626" stroke-width="1.1"/><path d="M948.03 763.99 L954.06 759.27" stroke="#262626" stroke-width="1.1"/><path d="M950.54 764.66 L957.64 767.53" stroke="#262626" stroke-width="1.1"/><circle cx="948.7" cy="766.5" r="2.4" fill="#262626"/><path d="M1034 763 H1038.5 L1040.5 760 H1046 L1048 763 H1053 V774.5 H1034Z" fill="#b4b4b4"/><circle cx="1043.5" cy="768.5" r="3.6" fill="#262626"/><circle cx="1043.5" cy="768.5" r="1.9" fill="#b4b4b4"/><path d="M1064 769.5 Q1074 759 1084 769.5 Q1074 780 1064 769.5Z" fill="#3d3d3d"/><circle cx="1074" cy="769.5" r="3" fill="#262626"/><circle cx="1079.5" cy="760.5" r="4" fill="none" stroke="#3d3d3d" stroke-width="1.5"/><rect x="1106" y="755.2" width="97.8" height="24.8" rx="2" fill="#1c1c1c" stroke="#242424"/><rect x="465" y="783.6" width="1214.5" height="5" fill="#161616"/><defs><filter id="gl" x="-50%" y="-50%" width="200%" height="200%"><feGaussianBlur stdDeviation="1.7"/></filter><filter id="cb" x="-50%" y="-50%" width="200%" height="200%"><feGaussianBlur stdDeviation="0.7"/></filter></defs><g filter="url(#gl)" opacity="0.42"><rect x="519.00" y="423.60" width="10.00" height="9.80" rx="4.5" fill="#ff193f"/><rect x="530.29" y="423.60" width="10.00" height="9.80" rx="4.5" fill="#ff2019"/><rect x="541.58" y="423.60" width="10.00" height="9.80" rx="4.5" fill="#ff4e19"/><rect x="552.88" y="423.60" width="10.00" height="9.80" rx="4.5" fill="#ff7b19"/><rect x="564.17" y="423.60" width="10.00" height="9.80" rx="4.5" fill="#ffa919"/><rect x="575.46" y="423.60" width="10.00" height="9.80" rx="4.5" fill="#ffd619"/><rect x="586.75" y="423.60" width="10.00" height="9.80" rx="4.5" fill="#f9ff19"/><rect x="598.04" y="423.60" width="10.00" height="9.80" rx="4.5" fill="#ccff19"/><rect x="609.34" y="423.60" width="10.00" height="9.80" rx="4.5" fill="#9eff19"/><rect x="620.63" y="423.60" width="10.00" height="9.80" rx="4.5" fill="#71ff19"/><rect x="631.92" y="423.60" width="10.00" height="9.80" rx="4.5" fill="#43ff19"/><rect x="643.21" y="423.45" width="10.00" height="10.10" rx="4.5" fill="#19ff1c"/><rect x="654.50" y="421.95" width="10.00" height="13.10" rx="4.5" fill="#19ff4a"/><rect x="665.80" y="416.95" width="10.00" height="23.10" rx="4.5" fill="#19ff77"/><rect x="677.09" y="418.15" width="10.00" height="20.70" rx="4.5" fill="#19ffa5"/><rect x="688.38" y="419.95" width="10.00" height="17.10" rx="4.5" fill="#19ffd3"/><rect x="699.67" y="420.65" width="10.00" height="15.70" rx="4.5" fill="#19fdff"/><rect x="710.96" y="416.95" width="10.00" height="23.10" rx="4.5" fill="#19cfff"/><rect x="722.26" y="414.95" width="10.00" height="27.10" rx="4.5" fill="#19a2ff"/><rect x="733.55" y="421.45" width="10.00" height="14.10" rx="4.5" fill="#1974ff"/><rect x="744.84" y="420.65" width="10.00" height="15.70" rx="4.5" fill="#1947ff"/><rect x="756.13" y="412.95" width="10.00" height="31.10" rx="4.5" fill="#1919ff"/><rect x="767.42" y="409.45" width="10.00" height="38.10" rx="4.5" fill="#4619ff"/><rect x="778.72" y="412.20" width="10.00" height="32.60" rx="4.5" fill="#7419ff"/><rect x="790.01" y="416.45" width="10.00" height="24.10" rx="4.5" fill="#a119ff"/><rect x="801.30" y="418.15" width="10.00" height="20.70" rx="4.5" fill="#cf19ff"/><rect x="812.59" y="408.45" width="10.00" height="40.10" rx="4.5" fill="#fc19ff"/><rect x="823.88" y="399.95" width="10.00" height="57.10" rx="4.5" fill="#ff19d3"/><rect x="835.18" y="414.45" width="10.00" height="28.10" rx="4.5" fill="#ff19a6"/><rect x="846.47" y="421.25" width="10.00" height="14.50" rx="4.5" fill="#ff1978"/><rect x="857.76" y="412.45" width="10.00" height="32.10" rx="4.5" fill="#ff194b"/><rect x="869.05" y="410.95" width="10.00" height="35.10" rx="4.5" fill="#ff191d"/><rect x="880.34" y="414.70" width="10.00" height="27.60" rx="4.5" fill="#ff4219"/><rect x="891.64" y="418.70" width="10.00" height="19.60" rx="4.5" fill="#ff7019"/><rect x="902.93" y="417.95" width="10.00" height="21.10" rx="4.5" fill="#ff9d19"/><rect x="914.22" y="416.70" width="10.00" height="23.60" rx="4.5" fill="#ffcb19"/><rect x="925.51" y="420.70" width="10.00" height="15.60" rx="4.5" fill="#fff819"/><rect x="936.80" y="423.45" width="10.00" height="10.10" rx="4.5" fill="#d7ff19"/><rect x="948.10" y="417.95" width="10.00" height="21.10" rx="4.5" fill="#aaff19"/><rect x="959.39" y="416.70" width="10.00" height="23.60" rx="4.5" fill="#7cff19"/><rect x="970.68" y="420.70" width="10.00" height="15.60" rx="4.5" fill="#4fff19"/><rect x="981.97" y="420.70" width="10.00" height="15.60" rx="4.5" fill="#21ff19"/><rect x="993.26" y="418.20" width="10.00" height="20.60" rx="4.5" fill="#19ff3e"/><rect x="1004.56" y="418.95" width="10.00" height="19.10" rx="4.5" fill="#19ff6c"/><rect x="1015.85" y="418.95" width="10.00" height="19.10" rx="4.5" fill="#19ff9a"/><rect x="1027.14" y="421.95" width="10.00" height="13.10" rx="4.5" fill="#19ffc7"/><rect x="1038.43" y="417.95" width="10.00" height="21.10" rx="4.5" fill="#19fff5"/><rect x="1049.72" y="419.70" width="10.00" height="17.60" rx="4.5" fill="#19dbff"/><rect x="1061.02" y="419.95" width="10.00" height="17.10" rx="4.5" fill="#19adff"/><rect x="1072.31" y="419.70" width="10.00" height="17.60" rx="4.5" fill="#1980ff"/><rect x="1083.60" y="418.20" width="10.00" height="20.60" rx="4.5" fill="#19adff"/><rect x="1094.89" y="416.45" width="10.00" height="24.10" rx="4.5" fill="#19dbff"/><rect x="1106.18" y="417.95" width="10.00" height="21.10" rx="4.5" fill="#19fff5"/><rect x="1117.48" y="421.20" width="10.00" height="14.60" rx="4.5" fill="#19ffc7"/><rect x="1128.77" y="419.95" width="10.00" height="17.10" rx="4.5" fill="#19ff9a"/><rect x="1140.06" y="418.20" width="10.00" height="20.60" rx="4.5" fill="#19ff6c"/><rect x="1151.35" y="419.95" width="10.00" height="17.10" rx="4.5" fill="#19ff3e"/><rect x="1162.64" y="423.60" width="10.00" height="9.80" rx="4.5" fill="#21ff19"/><rect x="1173.94" y="423.60" width="10.00" height="9.80" rx="4.5" fill="#4fff19"/><rect x="1185.23" y="421.70" width="10.00" height="13.60" rx="4.5" fill="#7cff19"/><rect x="1196.52" y="423.20" width="10.00" height="10.60" rx="4.5" fill="#aaff19"/><rect x="1207.81" y="421.45" width="10.00" height="14.10" rx="4.5" fill="#d7ff19"/><rect x="1219.10" y="423.60" width="10.00" height="9.80" rx="4.5" fill="#fff819"/><rect x="1230.40" y="421.20" width="10.00" height="14.60" rx="4.5" fill="#ffcb19"/><rect x="1241.69" y="421.20" width="10.00" height="14.60" rx="4.5" fill="#ff9d19"/><rect x="1252.98" y="421.20" width="10.00" height="14.60" rx="4.5" fill="#ff7019"/><rect x="1264.27" y="419.95" width="10.00" height="17.10" rx="4.5" fill="#ff4219"/><rect x="1275.56" y="420.20" width="10.00" height="16.60" rx="4.5" fill="#ff191d"/><rect x="1286.86" y="422.20" width="10.00" height="12.60" rx="4.5" fill="#ff194b"/><rect x="1298.15" y="422.45" width="10.00" height="12.10" rx="4.5" fill="#ff1978"/><rect x="1309.44" y="422.45" width="10.00" height="12.10" rx="4.5" fill="#ff19a6"/><rect x="1320.73" y="420.95" width="10.00" height="15.10" rx="4.5" fill="#ff19d3"/><rect x="1332.02" y="419.95" width="10.00" height="17.10" rx="4.5" fill="#fc19ff"/><rect x="1343.32" y="416.45" width="10.00" height="24.10" rx="4.5" fill="#cf19ff"/><rect x="1354.61" y="414.45" width="10.00" height="28.10" rx="4.5" fill="#a119ff"/><rect x="1365.90" y="417.45" width="10.00" height="22.10" rx="4.5" fill="#7419ff"/><rect x="1377.19" y="423.60" width="10.00" height="9.80" rx="4.5" fill="#4619ff"/><rect x="1388.48" y="421.95" width="10.00" height="13.10" rx="4.5" fill="#1919ff"/><rect x="1399.78" y="421.70" width="10.00" height="13.60" rx="4.5" fill="#1947ff"/><rect x="1411.07" y="422.45" width="10.00" height="12.10" rx="4.5" fill="#1974ff"/><rect x="1422.36" y="420.20" width="10.00" height="16.60" rx="4.5" fill="#19a2ff"/><rect x="1433.65" y="418.70" width="10.00" height="19.60" rx="4.5" fill="#19cfff"/><rect x="1444.94" y="423.20" width="10.00" height="10.60" rx="4.5" fill="#19fdff"/><rect x="1456.24" y="419.45" width="10.00" height="18.10" rx="4.5" fill="#19ffd3"/><rect x="1467.53" y="422.10" width="10.00" height="12.80" rx="4.5" fill="#19ffa5"/><rect x="1478.82" y="423.45" width="10.00" height="10.10" rx="4.5" fill="#19ff77"/><rect x="1490.11" y="422.45" width="10.00" height="12.10" rx="4.5" fill="#19ff4a"/><rect x="1501.40" y="421.95" width="10.00" height="13.10" rx="4.5" fill="#19ff1c"/><rect x="1512.70" y="423.60" width="10.00" height="9.80" rx="4.5" fill="#43ff19"/><rect x="1523.99" y="422.10" width="10.00" height="12.80" rx="4.5" fill="#71ff19"/><rect x="1535.28" y="421.55" width="10.00" height="13.90" rx="4.5" fill="#9eff19"/><rect x="1546.57" y="422.45" width="10.00" height="12.10" rx="4.5" fill="#ccff19"/><rect x="1557.86" y="422.45" width="10.00" height="12.10" rx="4.5" fill="#f9ff19"/><rect x="1569.16" y="421.25" width="10.00" height="14.50" rx="4.5" fill="#ffd619"/><rect x="1580.45" y="423.60" width="10.00" height="9.80" rx="4.5" fill="#ffa919"/><rect x="1591.74" y="423.60" width="10.00" height="9.80" rx="4.5" fill="#ff7b19"/><rect x="1603.03" y="423.60" width="10.00" height="9.80" rx="4.5" fill="#ff4e19"/><rect x="1614.32" y="423.60" width="10.00" height="9.80" rx="4.5" fill="#ff2019"/><rect x="1625.62" y="423.60" width="10.00" height="9.80" rx="4.5" fill="#ff193f"/></g><g filter="url(#cb)"><rect x="522.30" y="426.90" width="3.40" height="3.20" rx="1.5" fill="#ff193f"/><rect x="533.59" y="426.90" width="3.40" height="3.20" rx="1.5" fill="#ff2019"/><rect x="544.88" y="426.90" width="3.40" height="3.20" rx="1.5" fill="#ff4e19"/><rect x="556.18" y="426.90" width="3.40" height="3.20" rx="1.5" fill="#ff7b19"/><rect x="567.47" y="426.90" width="3.40" height="3.20" rx="1.5" fill="#ffa919"/><rect x="578.76" y="426.90" width="3.40" height="3.20" rx="1.5" fill="#ffd619"/><rect x="590.05" y="426.90" width="3.40" height="3.20" rx="1.5" fill="#f9ff19"/><rect x="601.34" y="426.90" width="3.40" height="3.20" rx="1.5" fill="#ccff19"/><rect x="612.64" y="426.90" width="3.40" height="3.20" rx="1.5" fill="#9eff19"/><rect x="623.93" y="426.90" width="3.40" height="3.20" rx="1.5" fill="#71ff19"/><rect x="635.22" y="426.90" width="3.40" height="3.20" rx="1.5" fill="#43ff19"/><rect x="646.51" y="426.75" width="3.40" height="3.50" rx="1.5" fill="#19ff1c"/><rect x="657.80" y="425.25" width="3.40" height="6.50" rx="1.5" fill="#19ff4a"/><rect x="669.10" y="420.25" width="3.40" height="16.50" rx="1.5" fill="#19ff77"/><rect x="680.39" y="421.45" width="3.40" height="14.10" rx="1.5" fill="#19ffa5"/><rect x="691.68" y="423.25" width="3.40" height="10.50" rx="1.5" fill="#19ffd3"/><rect x="702.97" y="423.95" width="3.40" height="9.10" rx="1.5" fill="#19fdff"/><rect x="714.26" y="420.25" width="3.40" height="16.50" rx="1.5" fill="#19cfff"/><rect x="725.56" y="418.25" width="3.40" height="20.50" rx="1.5" fill="#19a2ff"/><rect x="736.85" y="424.75" width="3.40" height="7.50" rx="1.5" fill="#1974ff"/><rect x="748.14" y="423.95" width="3.40" height="9.10" rx="1.5" fill="#1947ff"/><rect x="759.43" y="416.25" width="3.40" height="24.50" rx="1.5" fill="#1919ff"/><rect x="770.72" y="412.75" width="3.40" height="31.50" rx="1.5" fill="#4619ff"/><rect x="782.02" y="415.50" width="3.40" height="26.00" rx="1.5" fill="#7419ff"/><rect x="793.31" y="419.75" width="3.40" height="17.50" rx="1.5" fill="#a119ff"/><rect x="804.60" y="421.45" width="3.40" height="14.10" rx="1.5" fill="#cf19ff"/><rect x="815.89" y="411.75" width="3.40" height="33.50" rx="1.5" fill="#fc19ff"/><rect x="827.18" y="403.25" width="3.40" height="50.50" rx="1.5" fill="#ff19d3"/><rect x="838.48" y="417.75" width="3.40" height="21.50" rx="1.5" fill="#ff19a6"/><rect x="849.77" y="424.55" width="3.40" height="7.90" rx="1.5" fill="#ff1978"/><rect x="861.06" y="415.75" width="3.40" height="25.50" rx="1.5" fill="#ff194b"/><rect x="872.35" y="414.25" width="3.40" height="28.50" rx="1.5" fill="#ff191d"/><rect x="883.64" y="418.00" width="3.40" height="21.00" rx="1.5" fill="#ff4219"/><rect x="894.94" y="422.00" width="3.40" height="13.00" rx="1.5" fill="#ff7019"/><rect x="906.23" y="421.25" width="3.40" height="14.50" rx="1.5" fill="#ff9d19"/><rect x="917.52" y="420.00" width="3.40" height="17.00" rx="1.5" fill="#ffcb19"/><rect x="928.81" y="424.00" width="3.40" height="9.00" rx="1.5" fill="#fff819"/><rect x="940.10" y="426.75" width="3.40" height="3.50" rx="1.5" fill="#d7ff19"/><rect x="951.40" y="421.25" width="3.40" height="14.50" rx="1.5" fill="#aaff19"/><rect x="962.69" y="420.00" width="3.40" height="17.00" rx="1.5" fill="#7cff19"/><rect x="973.98" y="424.00" width="3.40" height="9.00" rx="1.5" fill="#4fff19"/><rect x="985.27" y="424.00" width="3.40" height="9.00" rx="1.5" fill="#21ff19"/><rect x="996.56" y="421.50" width="3.40" height="14.00" rx="1.5" fill="#19ff3e"/><rect x="1007.86" y="422.25" width="3.40" height="12.50" rx="1.5" fill="#19ff6c"/><rect x="1019.15" y="422.25" width="3.40" height="12.50" rx="1.5" fill="#19ff9a"/><rect x="1030.44" y="425.25" width="3.40" height="6.50" rx="1.5" fill="#19ffc7"/><rect x="1041.73" y="421.25" width="3.40" height="14.50" rx="1.5" fill="#19fff5"/><rect x="1053.02" y="423.00" width="3.40" height="11.00" rx="1.5" fill="#19dbff"/><rect x="1064.32" y="423.25" width="3.40" height="10.50" rx="1.5" fill="#19adff"/><rect x="1075.61" y="423.00" width="3.40" height="11.00" rx="1.5" fill="#1980ff"/><rect x="1086.90" y="421.50" width="3.40" height="14.00" rx="1.5" fill="#19adff"/><rect x="1098.19" y="419.75" width="3.40" height="17.50" rx="1.5" fill="#19dbff"/><rect x="1109.48" y="421.25" width="3.40" height="14.50" rx="1.5" fill="#19fff5"/><rect x="1120.78" y="424.50" width="3.40" height="8.00" rx="1.5" fill="#19ffc7"/><rect x="1132.07" y="423.25" width="3.40" height="10.50" rx="1.5" fill="#19ff9a"/><rect x="1143.36" y="421.50" width="3.40" height="14.00" rx="1.5" fill="#19ff6c"/><rect x="1154.65" y="423.25" width="3.40" height="10.50" rx="1.5" fill="#19ff3e"/><rect x="1165.94" y="426.90" width="3.40" height="3.20" rx="1.5" fill="#21ff19"/><rect x="1177.24" y="426.90" width="3.40" height="3.20" rx="1.5" fill="#4fff19"/><rect x="1188.53" y="425.00" width="3.40" height="7.00" rx="1.5" fill="#7cff19"/><rect x="1199.82" y="426.50" width="3.40" height="4.00" rx="1.5" fill="#aaff19"/><rect x="1211.11" y="424.75" width="3.40" height="7.50" rx="1.5" fill="#d7ff19"/><rect x="1222.40" y="426.90" width="3.40" height="3.20" rx="1.5" fill="#fff819"/><rect x="1233.70" y="424.50" width="3.40" height="8.00" rx="1.5" fill="#ffcb19"/><rect x="1244.99" y="424.50" width="3.40" height="8.00" rx="1.5" fill="#ff9d19"/><rect x="1256.28" y="424.50" width="3.40" height="8.00" rx="1.5" fill="#ff7019"/><rect x="1267.57" y="423.25" width="3.40" height="10.50" rx="1.5" fill="#ff4219"/><rect x="1278.86" y="423.50" width="3.40" height="10.00" rx="1.5" fill="#ff191d"/><rect x="1290.16" y="425.50" width="3.40" height="6.00" rx="1.5" fill="#ff194b"/><rect x="1301.45" y="425.75" width="3.40" height="5.50" rx="1.5" fill="#ff1978"/><rect x="1312.74" y="425.75" width="3.40" height="5.50" rx="1.5" fill="#ff19a6"/><rect x="1324.03" y="424.25" width="3.40" height="8.50" rx="1.5" fill="#ff19d3"/><rect x="1335.32" y="423.25" width="3.40" height="10.50" rx="1.5" fill="#fc19ff"/><rect x="1346.62" y="419.75" width="3.40" height="17.50" rx="1.5" fill="#cf19ff"/><rect x="1357.91" y="417.75" width="3.40" height="21.50" rx="1.5" fill="#a119ff"/><rect x="1369.20" y="420.75" width="3.40" height="15.50" rx="1.5" fill="#7419ff"/><rect x="1380.49" y="426.90" width="3.40" height="3.20" rx="1.5" fill="#4619ff"/><rect x="1391.78" y="425.25" width="3.40" height="6.50" rx="1.5" fill="#1919ff"/><rect x="1403.08" y="425.00" width="3.40" height="7.00" rx="1.5" fill="#1947ff"/><rect x="1414.37" y="425.75" width="3.40" height="5.50" rx="1.5" fill="#1974ff"/><rect x="1425.66" y="423.50" width="3.40" height="10.00" rx="1.5" fill="#19a2ff"/><rect x="1436.95" y="422.00" width="3.40" height="13.00" rx="1.5" fill="#19cfff"/><rect x="1448.24" y="426.50" width="3.40" height="4.00" rx="1.5" fill="#19fdff"/><rect x="1459.54" y="422.75" width="3.40" height="11.50" rx="1.5" fill="#19ffd3"/><rect x="1470.83" y="425.40" width="3.40" height="6.20" rx="1.5" fill="#19ffa5"/><rect x="1482.12" y="426.75" width="3.40" height="3.50" rx="1.5" fill="#19ff77"/><rect x="1493.41" y="425.75" width="3.40" height="5.50" rx="1.5" fill="#19ff4a"/><rect x="1504.70" y="425.25" width="3.40" height="6.50" rx="1.5" fill="#19ff1c"/><rect x="1516.00" y="426.90" width="3.40" height="3.20" rx="1.5" fill="#43ff19"/><rect x="1527.29" y="425.40" width="3.40" height="6.20" rx="1.5" fill="#71ff19"/><rect x="1538.58" y="424.85" width="3.40" height="7.30" rx="1.5" fill="#9eff19"/><rect x="1549.87" y="425.75" width="3.40" height="5.50" rx="1.5" fill="#ccff19"/><rect x="1561.16" y="425.75" width="3.40" height="5.50" rx="1.5" fill="#f9ff19"/><rect x="1572.46" y="424.55" width="3.40" height="7.90" rx="1.5" fill="#ffd619"/><rect x="1583.75" y="426.90" width="3.40" height="3.20" rx="1.5" fill="#ffa919"/><rect x="1595.04" y="426.90" width="3.40" height="3.20" rx="1.5" fill="#ff7b19"/><rect x="1606.33" y="426.90" width="3.40" height="3.20" rx="1.5" fill="#ff4e19"/><rect x="1617.62" y="426.90" width="3.40" height="3.20" rx="1.5" fill="#ff2019"/><rect x="1628.92" y="426.90" width="3.40" height="3.20" rx="1.5" fill="#ff193f"/></g><circle cx="512.6" cy="428.4" r="6.6" fill="#e89a9a" fill-opacity="0.55" stroke="#d06262" stroke-width="1.5"/><circle cx="512.6" cy="428.4" r="3.6" fill="none" stroke="#f6dada" stroke-width="1" stroke-dasharray="1.6 1.2"/><path d="M512.6 422.4 V434.4 M506.6 428.4 H518.6" stroke="#dc7d7d" stroke-width="0.9"/><path d="M516.1 437.4 L521.6 431.9" stroke="#6f6f6f" stroke-width="1.6" stroke-linecap="round"/><circle cx="1630.3" cy="428.4" r="6.6" fill="#e89a9a" fill-opacity="0.55" stroke="#d06262" stroke-width="1.5"/><circle cx="1630.3" cy="428.4" r="3.6" fill="none" stroke="#f6dada" stroke-width="1" stroke-dasharray="1.6 1.2"/><path d="M1630.3 422.4 V434.4 M1624.3 428.4 H1636.3" stroke="#dc7d7d" stroke-width="0.9"/><path d="M1633.8 437.4 L1639.3 431.9" stroke="#6f6f6f" stroke-width="1.6" stroke-linecap="round"/><circle cx="1071.4" cy="427.8" r="5.4" fill="#c8d4ff" fill-opacity="0.35" stroke="#d86a6a" stroke-width="1.5"/><path d="M1071.4 415.5 V422.2 M1071.4 433.4 V440 M1059.3 427.8 H1066 M1076.8 427.8 H1083.5" stroke="#de8c8c" stroke-width="2.4"/><path d="M1073.4 437 V442.5" stroke="#909090" stroke-width="1.1"/><path d="M1077.5 430 H1086" stroke="#555a70" stroke-width="0.9"/></svg><div class="t" style="left:557.6px;top:48.08px;font-size:15.6px;color:#e6e6e6;">Composition <span style="color:#3a9bf0">Comp 1</span></div><div class="t" style="left:781px;top:48.28px;font-size:15.6px;color:#9c9c9c;">Layer (none)</div><div class="t" style="left:951px;top:48.28px;font-size:15.6px;color:#9c9c9c;">Metadata</div><div class="t" style="left:1096px;top:48.28px;font-size:15.6px;color:#9c9c9c;">Footage (none)</div><div class="t" style="left:506.8px;top:84.38px;font-size:15.6px;color:#3a9bf0;">Comp 1</div><div class="t" style="left:483px;top:760.08px;font-size:15.6px;color:#bdbdbd;">100%</div><div class="t" style="left:597.7px;top:760.08px;font-size:15.6px;color:#bdbdbd;">(Full)</div><div class="t" style="left:967.8px;top:760.28px;font-size:15.6px;color:#3a9bf0;">+0,0</div><div class="t" style="left:1118.3px;top:760.08px;font-size:15.6px;color:#bdbdbd;">0:00:04:18</div>

<!-- RIGHT PANEL -->
<div class="a" style="left:1685.3px;top:36px;width:294px;height:747.6px;background:#282828"></div><svg width="1999" height="790" style="left:0;top:0"><rect x="1979.5" y="36" width="19.5" height="747.6" fill="#242424"/><rect x="1992" y="36" width="7" height="747.6" fill="#1f1f1f"/><rect x="1686.8" y="74.60" width="292" height="2.4" fill="#181818"/><rect x="1686.8" y="117.60" width="292" height="2.4" fill="#181818"/><rect x="1686.8" y="160.40" width="292" height="2.4" fill="#181818"/><path d="M1953 181 h12 M1953 185.8 h12 M1953 190.6 h12" stroke="#a8a8a8" stroke-width="1.5"/><rect x="1693.8" y="209.4" width="278.2" height="25.2" rx="3" fill="#141414" stroke="#1e1e1e" stroke-width="1"/><circle cx="1713" cy="219.6" r="4.8" fill="none" stroke="#2f8fe8" stroke-width="1.7"/><path d="M1709.5 223 L1703.5 228.8" stroke="#2f8fe8" stroke-width="1.8" stroke-linecap="round"/><path d="M1718.5 224.5 L1726.2 224.5 L1722.3 228.5Z" fill="#2f8fe8"/><path d="M1955.5 217.8 L1966 228.3 M1966 217.8 L1955.5 228.3" stroke="#d0d0d0" stroke-width="1.9"/><rect x="1686.8" y="239" width="292" height="1.8" fill="#141414"/><path d="M1695.6 251.2 L1700.4 256 L1705.2 251.2" fill="none" stroke="#a8a8a8" stroke-width="1.5"/><rect x="1686.8" y="265.3" width="292" height="22.3" fill="#333333"/><rect x="1758" y="266.5" width="124.8" height="20.3" fill="#a9a9a9"/><rect x="1735.5" y="270.7" width="17" height="14.5" fill="#a8a8a8"/><rect x="1741.5" y="269.2" width="5" height="3.5" fill="#272727"/><rect x="1735.5" y="269.2" width="0" height="0"/><text x="1736.5" y="283.8" font-family="Liberation Sans" font-size="12" font-weight="bold" fill="#2a2a2a" textLength="15" lengthAdjust="spacingAndGlyphs">32</text><rect x="1735.5" y="295.1" width="17" height="14.5" fill="#a8a8a8"/><rect x="1741.5" y="293.6" width="5" height="3.5" fill="#272727"/><rect x="1735.5" y="293.6" width="0" height="0"/><text x="1736.5" y="308.20000000000005" font-family="Liberation Sans" font-size="12" font-weight="bold" fill="#2a2a2a" textLength="15" lengthAdjust="spacingAndGlyphs">32</text><rect x="1686.8" y="313.9" width="292" height="1.8" fill="#141414"/><rect x="1977.8" y="314" width="1.4" height="24" fill="#141414"/><path d="M1954.3 318 H1968.9 V335.4 H1958 L1951.3 328.7 V321 Q1951.3 318 1954.3 318Z" fill="#b0b0b0"/><path d="M1952 329.4 L1958.5 329.4 L1958.5 335.4Z" fill="#272727" stroke="#b0b0b0" stroke-width="0.8"/><rect x="1686.8" y="341.40" width="292" height="2.4" fill="#181818"/><rect x="1686.8" y="384.40" width="292" height="2.4" fill="#181818"/><rect x="1686.8" y="427.40" width="292" height="2.4" fill="#181818"/><rect x="1686.8" y="470.40" width="292" height="2.4" fill="#181818"/><rect x="1686.8" y="513.40" width="292" height="2.4" fill="#181818"/><rect x="1686.8" y="556.40" width="292" height="2.4" fill="#181818"/><rect x="1686.8" y="599.40" width="292" height="2.4" fill="#181818"/><rect x="1686.8" y="642.40" width="292" height="2.4" fill="#181818"/><rect x="1686.8" y="685.10" width="292" height="2.4" fill="#181818"/></svg><div class="t" style="left:1703px;top:48.38px;font-size:15.6px;color:#a6a6a6;">Info</div><div class="t" style="left:1703px;top:91.18px;font-size:15.6px;color:#a6a6a6;">Audio</div><div class="t" style="left:1703px;top:133.98px;font-size:15.6px;color:#a6a6a6;">Preview</div><div class="t" style="left:1702.5px;top:177.18px;font-size:15.6px;color:#cfcfcf;">Effects &amp; Presets</div><div class="t" style="left:1733.6px;top:215.48px;font-size:15.6px;color:#d6d6d6;">audio</div><div class="t" style="left:1708.6px;top:244.68px;font-size:15.6px;color:#a6a6a6;">Generate</div><div class="t" style="left:1761.6px;top:268.98px;font-size:15.6px;color:#1d1d1d;">Audio Spectrum</div><div class="t" style="left:1761.6px;top:293.58px;font-size:15.6px;color:#a6a6a6;">Audio Waveform</div><div class="t" style="left:1703px;top:357.98px;font-size:15.6px;color:#a6a6a6;">Libraries</div><div class="t" style="left:1703px;top:400.98px;font-size:15.6px;color:#a6a6a6;">Tracker</div><div class="t" style="left:1703px;top:443.98px;font-size:15.6px;color:#a6a6a6;">Align</div><div class="t" style="left:1703px;top:486.98px;font-size:15.6px;color:#a6a6a6;">Paragraph</div><div class="t" style="left:1703px;top:529.98px;font-size:15.6px;color:#a6a6a6;">Character</div><div class="t" style="left:1703px;top:572.98px;font-size:15.6px;color:#a6a6a6;">Content-Aware Fill</div><div class="t" style="left:1703px;top:615.98px;font-size:15.6px;color:#a6a6a6;">Brushes</div><div class="t" style="left:1703px;top:658.98px;font-size:15.6px;color:#a6a6a6;">Paint</div>

<!-- TIMELINE -->
<div class="a" style="left:1.5px;top:789.4px;width:1997.5px;height:401.6px;background:#282828"></div><svg width="1999" height="1191" style="left:0;top:0"><path d="M17 807 L24.5 814 M24.5 807 L17 814" stroke="#a0a0a0" stroke-width="1.3"/><rect x="38.8" y="801" width="14.3" height="14.6" fill="#ab9a78"/><path d="M137.5 805.8 h11.9 M137.5 810.6 h11.9 M137.5 815.3 h11.9" stroke="#a8a8a8" stroke-width="1.5"/><rect x="153.1" y="841.3" width="371.1" height="25.4" rx="3" fill="#161616"/><circle cx="172" cy="851.5" r="5.6" fill="none" stroke="#c0c0c0" stroke-width="1.5"/><path d="M168 855.6 L162.5 860.8" stroke="#c0c0c0" stroke-width="1.6" stroke-linecap="round"/><path d="M178.5 857 L186 857 L182.2 860.5Z" fill="#c0c0c0"/><path d="M548 849 h5 M553 849 h5 M558 849 v13 M558 855.5 h5 M558 862 h5" stroke="#a8a8a8" stroke-width="1.4" fill="none"/><rect x="547.5" y="847.5" width="5" height="3" rx="1.5" fill="#a8a8a8"/><rect x="563" y="846.5" width="6" height="5" rx="1" fill="#a8a8a8"/><rect x="563" y="853.3" width="6" height="4.5" rx="1" fill="#a8a8a8"/><path d="M565 861.5 L571.5 861.5 L568.3 864.5Z" fill="#a8a8a8"/><rect x="596" y="855.5" width="23" height="7.3" fill="#777"/><path d="M598 854 Q599 845 607.5 845 Q616 845 617 854Z" fill="#a8a8a8"/><circle cx="604.5" cy="850" r="1.7" fill="#262626"/><circle cx="610.5" cy="850" r="1.7" fill="#262626"/><rect x="605.5" y="851" width="4" height="10" rx="2" fill="#a8a8a8"/><rect x="641" y="844" width="14" height="16.5" fill="none" stroke="#a8a8a8" stroke-width="1.4"/><path d="M638.5 847.5 H635 V863.5 H651 V860.5" fill="none" stroke="#a8a8a8" stroke-width="1.4"/><rect x="645" y="851.5" width="6" height="1.6" fill="#a8a8a8"/><circle cx="678" cy="857" r="5.6" fill="none" stroke="#a8a8a8" stroke-width="1.4"/><circle cx="681" cy="854" r="5.6" fill="#262626" stroke="#a8a8a8" stroke-width="1.4"/><circle cx="685" cy="850" r="6.3" fill="#6a6a6a" stroke="#a8a8a8" stroke-width="1.4"/><rect x="720.5" y="845" width="21" height="18" fill="none" stroke="#a8a8a8" stroke-width="1.5"/><path d="M723 849.5 Q728 849 730.5 854 Q733 859.5 738.5 859" fill="none" stroke="#a8a8a8" stroke-width="1.3"/><path d="M724 842 v3 M729 842 v3 M734 842 v3 M739 842 v3" stroke="#a8a8a8" stroke-width="1.2"/><rect x="1.5" y="879" width="764" height="2" fill="#080808"/><rect x="1.5" y="906.5" width="764" height="2.3" fill="#060606"/><rect x="98.7" y="887" width="1.4" height="16" fill="#141414"/><rect x="144.70000000000002" y="887" width="1.4" height="16" fill="#141414"/><rect x="191.70000000000002" y="887" width="1.4" height="16" fill="#141414"/><rect x="378.5" y="887" width="1.4" height="16" fill="#141414"/><rect x="574.4" y="887" width="1.4" height="16" fill="#141414"/><rect x="742.1999999999999" y="887" width="1.4" height="16" fill="#141414"/><path d="M11 895 Q18.3 888 25.6 895 Q18.3 902 11 895Z" fill="#a8a8a8"/><circle cx="18.3" cy="895" r="2.6" fill="#262626"/><circle cx="18.3" cy="895" r="1.2" fill="#a8a8a8"/><path d="M31.5 892 h3.5 l5.5 -5 v16 l-5.5 -5 h-3.5z" fill="#a8a8a8"/><path d="M42.5 891.5 Q44.5 895 42.5 898.5 M45.0 889 Q48.5 895 45.0 901" fill="none" stroke="#a8a8a8" stroke-width="1.5"/><circle cx="61" cy="895" r="4.8" fill="#a8a8a8"/><rect x="76" y="894" width="12.5" height="9" rx="1" fill="#a8a8a8"/><path d="M79 894 v-3 q0 -4 3.25 -4 q3.25 0 3.25 4 v3" fill="none" stroke="#a8a8a8" stroke-width="1.7"/><rect x="81.5" y="896.5" width="1.6" height="3.5" fill="#262626"/><path d="M119.5 888.5 L126 886.5 L137 897 L130 904 L119.5 894Z" fill="#a8a8a8"/><circle cx="124" cy="890.5" r="1.4" fill="#262626"/><path d="M387.6 895.5 Q388.1 887.5 394.6 887.5 Q401.1 887.5 401.6 895.5Z" fill="#a8a8a8"/><circle cx="392.0" cy="891.5" r="1.4" fill="#262626"/><circle cx="397.20000000000005" cy="891.5" r="1.4" fill="#262626"/><rect x="393.0" y="893.5" width="3.2" height="6.5" rx="1.6" fill="#a8a8a8"/><path d="M386.6 899.3 h5 M397.6 899.3 h5" stroke="#a8a8a8" stroke-width="1.3"/><circle cx="416.1" cy="895" r="3.4" fill="none" stroke="#a8a8a8" stroke-width="1.4"/><path d="M421.10 895.00 L423.30 895.00" stroke="#a8a8a8" stroke-width="1.3"/><path d="M419.64 898.54 L421.19 900.09" stroke="#a8a8a8" stroke-width="1.3"/><path d="M416.10 900.00 L416.10 902.20" stroke="#a8a8a8" stroke-width="1.3"/><path d="M412.56 898.54 L411.01 900.09" stroke="#a8a8a8" stroke-width="1.3"/><path d="M411.10 895.00 L408.90 895.00" stroke="#a8a8a8" stroke-width="1.3"/><path d="M412.56 891.46 L411.01 889.91" stroke="#a8a8a8" stroke-width="1.3"/><path d="M416.10 890.00 L416.10 887.80" stroke="#a8a8a8" stroke-width="1.3"/><path d="M419.64 891.46 L421.19 889.91" stroke="#a8a8a8" stroke-width="1.3"/><path d="M430 888 L443 902" stroke="#a8a8a8" stroke-width="1.6" stroke-dasharray="2.2 1.2"/><rect x="471.5" y="887.5" width="15" height="14" fill="none" stroke="#a8a8a8" stroke-width="1.3"/><rect x="474.5" y="894" width="9" height="1.6" fill="#a8a8a8"/><path d="M469.5 890 V903.5 H484" fill="none" stroke="#a8a8a8" stroke-width="1.3"/><circle cx="498" cy="898" r="4.5" fill="none" stroke="#a8a8a8" stroke-width="1.2"/><circle cx="500.5" cy="895.5" r="4.5" fill="#262626" stroke="#a8a8a8" stroke-width="1.2"/><circle cx="504.5" cy="892" r="5" fill="#6a6a6a" stroke="#a8a8a8" stroke-width="1.2"/><circle cx="523.4" cy="895" r="6.8" fill="none" stroke="#a8a8a8" stroke-width="1.6"/><path d="M527.9 890 A6.8 6.8 0 0 1 519 900Z" fill="#a8a8a8"/><path d="M528.2 890.2 L518.6 899.8" stroke="#a8a8a8" stroke-width="1"/><path d="M545.4 888 L551.5 891.5 V898.5 L545.4 902 L539.3 898.5 V891.5Z M539.3 891.5 L545.4 895 L551.5 891.5 M545.4 895 V902" fill="none" stroke="#a8a8a8" stroke-width="1.4"/><rect x="3" y="909.0" width="762.5" height="22.0" fill="#474747"/><rect x="3" y="932.2" width="762.5" height="23.399999999999977" fill="#2f2f2f"/><rect x="1.5" y="931.0" width="764" height="1.2" fill="#2a2a2a"/><rect x="9" y="910.5" width="18" height="19.0" fill="#333333"/><rect x="52" y="910.5" width="18" height="19.0" fill="#333333"/><rect x="73" y="910.5" width="19" height="19.0" fill="#333333"/><rect x="30" y="933.7" width="18.6" height="20.399999999999977" fill="#232323"/><rect x="52" y="933.7" width="18" height="20.399999999999977" fill="#232323"/><rect x="73" y="933.7" width="19" height="20.399999999999977" fill="#232323"/><path d="M10.8 920.0 Q18.3 912.0 25.8 920.0 Q18.3 928.0 10.8 920.0Z" fill="#a8a8a8"/><circle cx="18.3" cy="920.0" r="2.9" fill="#333333"/><path d="M32 940.9000000000001 h3.5 l5.5 -5 v16 l-5.5 -5 h-3.5z" fill="#a8a8a8"/><path d="M43 940.4000000000001 Q45 943.9000000000001 43 947.4000000000001 M45.5 937.9000000000001 Q49 943.9000000000001 45.5 949.9000000000001" fill="none" stroke="#a8a8a8" stroke-width="1.5"/><path d="M108.5 915.5 L113.5 920.0 L108.5 924.5" fill="none" stroke="#a8a8a8" stroke-width="1.5"/><path d="M108.5 939.4000000000001 L113.5 943.9000000000001 L108.5 948.4000000000001" fill="none" stroke="#a8a8a8" stroke-width="1.5"/><rect x="125" y="911.8" width="16.6" height="16.4" fill="#b33a3a"/><rect x="125" y="935.7" width="16.6" height="16.4" fill="#b4c8b0"/><rect x="197" y="911.5" width="19" height="17" fill="#ffffff" stroke="#111" stroke-width="1.5"/><path d="M199 934.9000000000001 H210 L214 938.9000000000001 V952.9000000000001 H199Z" fill="#f2f2f2"/><rect x="201" y="938.9000000000001" width="10" height="8" rx="2" fill="#e83030"/><path d="M204 941.4000000000001 h4 v4 M204 941.4000000000001 v3.5" stroke="#fff" stroke-width="1" fill="none"/><rect x="221" y="910.2" width="156.5" height="19.6" fill="#3b3b3b" stroke="#9d9d9d" stroke-width="2.2"/><rect x="386" y="910.5" width="17.80000000000001" height="19.0" fill="#333333"/><rect x="407.3" y="910.5" width="18.099999999999966" height="19.0" fill="#333333"/><rect x="428.9" y="910.5" width="18.0" height="19.0" fill="#333333"/><rect x="450.4" y="910.5" width="18.0" height="19.0" fill="#333333"/><rect x="493" y="910.5" width="18.5" height="19.0" fill="#333333"/><rect x="514.6" y="910.5" width="18.399999999999977" height="19.0" fill="#333333"/><rect x="536" y="910.5" width="18.200000000000045" height="19.0" fill="#333333"/><rect x="386" y="933.7" width="17.80000000000001" height="20.399999999999977" fill="#232323"/><rect x="428.9" y="933.7" width="18.0" height="20.399999999999977" fill="#232323"/><rect x="514.6" y="933.7" width="18.399999999999977" height="20.399999999999977" fill="#232323"/><path d="M387.8 920.5 Q388.3 912.5 394.8 912.5 Q401.3 912.5 401.8 920.5Z" fill="#a8a8a8"/><circle cx="392.2" cy="916.5" r="1.4" fill="#262626"/><circle cx="397.40000000000003" cy="916.5" r="1.4" fill="#262626"/><rect x="393.2" y="918.5" width="3.2" height="6.5" rx="1.6" fill="#a8a8a8"/><path d="M386.8 924.3 h5 M397.8 924.3 h5" stroke="#a8a8a8" stroke-width="1.3"/><path d="M387.8 944.4000000000001 Q388.3 936.4000000000001 394.8 936.4000000000001 Q401.3 936.4000000000001 401.8 944.4000000000001Z" fill="#a8a8a8"/><circle cx="392.2" cy="940.4000000000001" r="1.4" fill="#262626"/><circle cx="397.40000000000003" cy="940.4000000000001" r="1.4" fill="#262626"/><rect x="393.2" y="942.4000000000001" width="3.2" height="6.5" rx="1.6" fill="#a8a8a8"/><path d="M386.8 948.2 h5 M397.8 948.2 h5" stroke="#a8a8a8" stroke-width="1.3"/><path d="M431.5 927.0 L444.5 913.0" stroke="#a8a8a8" stroke-width="1.6"/><path d="M431.5 950.9000000000001 L444.5 936.9000000000001" stroke="#a8a8a8" stroke-width="1.6"/><path d="M590.8 919.0 m-1.5 0 a1.5 1.5 0 1 1 3 0 a3 3 0 1 1 -6 0 a4.5 4.5 0 1 1 9 0 a6.5 6.5 0 0 1 -12 3.5" fill="none" stroke="#a8a8a8" stroke-width="1.4"/><path d="M590.8 942.9000000000001 m-1.5 0 a1.5 1.5 0 1 1 3 0 a3 3 0 1 1 -6 0 a4.5 4.5 0 1 1 9 0 a6.5 6.5 0 0 1 -12 3.5" fill="none" stroke="#a8a8a8" stroke-width="1.4"/><rect x="608.9" y="910.2" width="127.8" height="19.6" fill="#1d1d1d"/><path d="M719.4 917.5 L724.4 922.5 L729.4 917.5" fill="none" stroke="#bdbdbd" stroke-width="1.5"/><rect x="608.9" y="934.1000000000001" width="127.8" height="19.6" fill="#1d1d1d"/><path d="M719.4 941.4000000000001 L724.4 946.4000000000001 L729.4 941.4000000000001" fill="none" stroke="#bdbdbd" stroke-width="1.5"/><rect x="764.5" y="789.4" width="2" height="401.6" fill="#111"/><rect x="766.5" y="955.2" width="1232.5" height="236" fill="#282828"/><rect x="777" y="955.2" width="1194.8" height="236" fill="#353535"/><rect x="766.5" y="955.2" width="10.5" height="236" fill="#2b2b2b"/><rect x="1962" y="955.2" width="9.8" height="236" fill="#2f2f2f"/><rect x="1971.8" y="836.5" width="27.2" height="354.5" fill="#232323"/><rect x="1996.5" y="789.4" width="2.5" height="401.6" fill="#1a1a1a"/><rect x="766" y="836.8" width="1206" height="14.2" fill="#111"/><rect x="776" y="838" width="1186.5" height="12" fill="#6b6b6b"/><path d="M776 838 V850 H772 Q766 850 766 844 Q766 838 772 838Z" fill="#2f8fe8"/><path d="M1962.9 838 V850 H1965.8 Q1971.8 850 1971.8 844 Q1971.8 838 1965.8 838Z" fill="#2f8fe8"/><rect x="777.00" y="867" width="1.2" height="11.5" fill="#9a9a9a"/><rect x="896.00" y="872" width="1.2" height="6.5" fill="#9a9a9a"/><rect x="1015.00" y="872" width="1.2" height="6.5" fill="#9a9a9a"/><rect x="1134.00" y="872" width="1.2" height="6.5" fill="#9a9a9a"/><rect x="1253.00" y="872" width="1.2" height="6.5" fill="#9a9a9a"/><rect x="1372.00" y="872" width="1.2" height="6.5" fill="#9a9a9a"/><rect x="1491.00" y="872" width="1.2" height="6.5" fill="#9a9a9a"/><rect x="1610.00" y="872" width="1.2" height="6.5" fill="#9a9a9a"/><rect x="1729.00" y="872" width="1.2" height="6.5" fill="#9a9a9a"/><rect x="1848.00" y="872" width="1.2" height="6.5" fill="#9a9a9a"/><rect x="1967" y="872" width="1.2" height="7" fill="#9a9a9a"/><rect x="766" y="879.4" width="1206" height="23" fill="#111"/><rect x="776" y="880.2" width="1186.5" height="21.2" fill="#666666"/><path d="M776 880.2 V901.4 H773 Q768 901.4 768 896 V885.5 Q768 880.2 773 880.2Z" fill="#2f8fe8"/><path d="M1962.9 880.2 V901.4 H1966 Q1971 901.4 1971 896 V885.5 Q1971 880.2 1966 880.2Z" fill="#2f8fe8"/><rect x="766.5" y="902.4" width="1205.5" height="6.6" fill="#1e1e1e"/><rect x="766.5" y="907.2" width="1229.5" height="1.8" fill="#0e0e0e"/><rect x="777.5" y="903.3" width="4" height="3.6" fill="#19c419"/><rect x="1343" y="903.3" width="4" height="3.6" fill="#19c419"/><rect x="766.5" y="909.0" width="10.5" height="22.0" fill="#3a3a3a"/><rect x="766.5" y="932.2" width="10.5" height="23.399999999999977" fill="#2b2b2b"/><rect x="766.5" y="931.0" width="1205.3" height="2" fill="#222"/><defs><filter id="noise" x="0" y="0" width="100%" height="100%"><feTurbulence type="fractalNoise" baseFrequency="0.9" numOctaves="1" seed="3"/><feColorMatrix type="matrix" values="0 0 0 0 0.5  0 0 0 0 0.5  0 0 0 0 0.5  0 0 0 0.12 0"/><feComposite in2="SourceGraphic" operator="in"/></filter></defs><rect x="777" y="909.3" width="1185" height="21.7" fill="#a5474a"/><rect x="777" y="909.3" width="1185" height="1" fill="#c06a6a"/><rect x="1962" y="909.0" width="9.8" height="22.0" fill="#4a4a4a"/><rect x="777" y="932.2" width="1194.8" height="23.399999999999977" fill="#7b8677"/><path d="M777.5 933.2 H785 Q779 934.2 778.5 940.2 Z" fill="#5a6258"/><path d="M1977 882.4 H1993.2 V896 L1985.1 903.5 L1977 896Z" fill="#a8a8a8"/><path d="M1974 922 L1983 912.5 L1983.5 921" fill="none" stroke="#a8a8a8" stroke-width="1.3"/><rect x="1983" y="915" width="10" height="10" fill="#a8a8a8"/><circle cx="1983" cy="924" r="4.2" fill="#232323" stroke="#a8a8a8" stroke-width="1.4"/><rect x="1341.3" y="838.5" width="1.4" height="11" fill="#2f8fe8"/><rect x="1341.4" y="870" width="1.3" height="321" fill="#2f8fe8"/><path d="M1334.2 857.8 H1349.6 V868 L1342 878 L1334.2 868Z" fill="#2f8fe8"/><path d="M1340 867.5 H1344 M1342 867.5 V876" stroke="#1a1a1a" stroke-width="1"/></svg><div class="t" style="left:68.8px;top:802.18px;font-size:15.6px;color:#d6d6d6;">Comp 1</div><div class="t" style="left:23.1px;top:837.26px;font-size:20px;color:#3a9bf0;font-weight:bold;letter-spacing:0.75px;-webkit-text-stroke:0;">0:00:04:18</div><div class="t" style="left:17.5px;top:860.75px;font-size:14px;color:#2a7fcf;letter-spacing:0.3px;">00114 (23.976 fps)</div><div class="t" style="left:153.6px;top:888.73px;font-size:13px;color:#a0a0a0;">#</div><div class="t" style="left:200.6px;top:888.73px;font-size:13px;color:#a6a6a6;">Source Name</div><div class="t" style="left:583.3px;top:888.64px;font-size:13.2px;color:#a6a6a6;">Parent &amp; Link</div><div class="t" style="left:450.5px;top:887.31px;font-size:17px;color:#a8a8a8;font-family:'Liberation Serif',serif;font-style:italic;">fx</div><div class="t" style="left:155px;top:912.48px;font-size:15.6px;color:#ababab;font-weight:bold;-webkit-text-stroke:0;">1</div><div class="t" style="left:155px;top:936.38px;font-size:15.6px;color:#ababab;font-weight:bold;-webkit-text-stroke:0;">2</div><div class="t" style="left:224.5px;top:912.63px;font-size:15.3px;color:#b9b9b9;font-weight:bold;-webkit-text-stroke:0;">White Solid 1</div><div class="t" style="left:224.5px;top:936.53px;font-size:15.3px;color:#b9b9b9;font-weight:bold;-webkit-text-stroke:0;">Ending.mp3</div><div class="t" style="left:452px;top:912.31px;font-size:17px;color:#a8a8a8;font-family:'Liberation Serif',serif;font-style:italic;">fx</div><div class="t" style="left:618.2px;top:912.48px;font-size:15.6px;color:#cfcfcf;">None</div><div class="t" style="left:618.2px;top:936.38px;font-size:15.6px;color:#cfcfcf;">None</div><div class="t" style="left:884.3000000000001px;top:854.91px;font-size:14.3px;color:#a0a0a0;">01s</div><div class="t" style="left:1003.3000000000001px;top:854.91px;font-size:14.3px;color:#a0a0a0;">02s</div><div class="t" style="left:1122.3px;top:854.91px;font-size:14.3px;color:#a0a0a0;">03s</div><div class="t" style="left:1241.3px;top:854.91px;font-size:14.3px;color:#a0a0a0;">04s</div><div class="t" style="left:1360.3px;top:854.91px;font-size:14.3px;color:#a0a0a0;">05s</div><div class="t" style="left:1479.3px;top:854.91px;font-size:14.3px;color:#a0a0a0;">06s</div><div class="t" style="left:1598.3px;top:854.91px;font-size:14.3px;color:#a0a0a0;">07s</div><div class="t" style="left:1717.3px;top:854.91px;font-size:14.3px;color:#a0a0a0;">08s</div><div class="t" style="left:1836.3px;top:854.91px;font-size:14.3px;color:#a0a0a0;">09s</div><div class="a" style="left:766.5px;top:850px;width:40px;height:22px;overflow:hidden"><div class="t" style="left:-2.5px;top:4.9px;font-size:14.3px;color:#a0a0a0">0:00s</div></div><div class="t" style="left:1955.5px;top:854.91px;font-size:14.3px;color:#a0a0a0;">10</div><svg width="1999" height="1191" style="left:0;top:0"><rect x="1320.2" y="816.2" width="44" height="370.6" fill="none" stroke="#0be60b" stroke-width="4.5"/></svg>

<div class="a" style="left:0;top:0;width:1px;height:33px;background:#3a3a3a"></div><div class="a" style="left:0;top:789.4px;width:1px;height:401.6px;background:#2b2b2b"></div>
</body></html>
